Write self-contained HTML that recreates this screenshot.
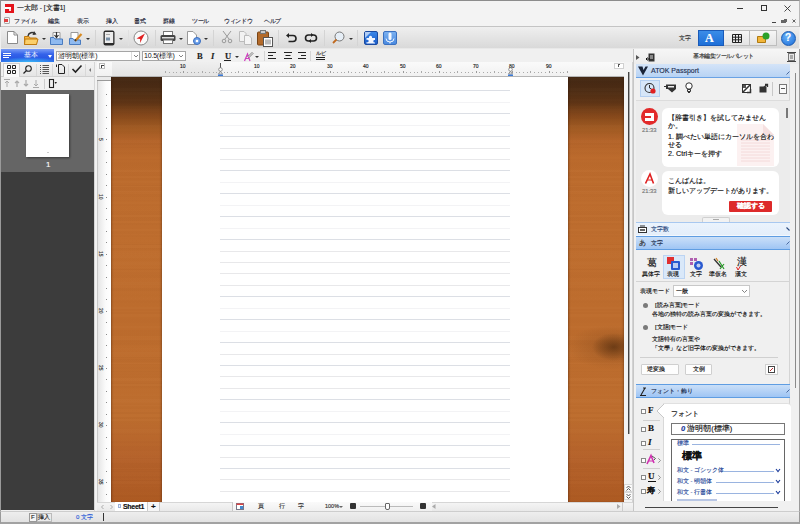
<!DOCTYPE html>
<html><head><meta charset="utf-8">
<style>
*{margin:0;padding:0;box-sizing:border-box}
html,body{width:800px;height:524px;overflow:hidden;background:#f0f0f0;font-family:"Liberation Sans",sans-serif;color:#222}
.a{position:absolute}
.t{position:absolute;white-space:nowrap;line-height:1;-webkit-text-stroke:.15px currentColor}
svg{position:absolute;overflow:visible}
.m{position:absolute;white-space:nowrap;line-height:1;font-size:6.3px;color:#1c2336;top:18px;letter-spacing:-.3px;-webkit-text-stroke:.15px currentColor}
.dd{position:absolute;width:0;height:0;border-left:2px solid transparent;border-right:2px solid transparent;border-top:2px solid #333}
.sep{position:absolute;width:1px;background:#d4d4d4}
</style></head><body>
<!-- ============ title bar ============ -->
<div class="a" style="left:0;top:0;width:800px;height:27px;background:#f3f3f3;border:1px solid #8c8c8c;border-right-color:#b8b8b8;border-bottom:none"></div>
<div class="a" style="left:5px;top:4px;width:9px;height:9px;background:#e4141b"></div>
<div class="a" style="left:5px;top:7px;width:6px;height:2px;background:#fff"></div>
<div class="a" style="left:9px;top:8px;width:2px;height:3px;background:#fff;opacity:.85"></div>
<div class="t" style="left:17px;top:5px;font-size:6.6px;color:#1a1a1a">一太郎 - [文書1]</div>
<!-- window controls -->
<div class="a" style="left:737px;top:8px;width:6px;height:1px;background:#333"></div>
<div class="a" style="left:761px;top:5px;width:6px;height:6px;border:1px solid #333"></div>
<svg style="left:784px;top:5px" width="7" height="7"><path d="M0.5 0.5L6.5 6.5M6.5 0.5L0.5 6.5" stroke="#333" stroke-width="0.9"/></svg>
<!-- mdi controls -->
<div class="a" style="left:772px;top:22px;width:4px;height:1px;background:#444"></div>
<div class="a" style="left:781px;top:20px;width:5px;height:3px;border:1px solid #666;border-top-width:2px"></div>
<div class="a" style="left:784px;top:19px;width:3px;height:3px;border-top:1px solid #666;border-right:1px solid #666"></div>
<svg style="left:792px;top:19px" width="4" height="4"><path d="M0.5 0.5L3.5 3.5M3.5 0.5L0.5 3.5" stroke="#555" stroke-width=".9"/></svg>
<!-- menu -->
<div class="a" style="left:4px;top:17px;width:6px;height:7px;border-radius:1px;border:1px solid #aaa;background:#f4f4f4"></div><div class="a" style="left:4px;top:19px;width:4px;height:3px;background:#e04040"></div>
<div class="m" style="left:14px">ファイル</div>
<div class="m" style="left:48px">編集</div>
<div class="m" style="left:77px">表示</div>
<div class="m" style="left:106px">挿入</div>
<div class="m" style="left:134px">書式</div>
<div class="m" style="left:163px">罫線</div>
<div class="m" style="left:192px">ツール</div>
<div class="m" style="left:224px">ウィンドウ</div>
<div class="m" style="left:264px">ヘルプ</div>
<!-- ============ toolbar ============ -->
<div class="a" style="left:1px;top:26px;width:798px;height:23px;background:linear-gradient(#efefef,#d9d9d9);border-top:1px solid #c4c4c4;border-bottom:1px solid #e8e8e8"></div>
<!-- new doc -->
<svg style="left:7px;top:31px" width="11" height="13"><path d="M0.5 0.5H7L10.5 4V12.5H0.5Z" fill="#fff" stroke="#8a8a8a"/><path d="M7 0.5V4H10.5" fill="none" stroke="#8a8a8a"/></svg>
<!-- open -->
<svg style="left:24px;top:30px" width="15" height="15"><path d="M0.5 6.5H5L6 8H12.5V14.5H0.5Z" fill="#f5b440" stroke="#c07a10"/><path d="M1 9H14L12.5 14.5H0.5Z" fill="#fbcf6a" stroke="#c07a10"/><path d="M4 6A4 4 0 0 1 11 4" fill="none" stroke="#333" stroke-width="1.4"/><path d="M10 1L12.5 4.5L8.5 5Z" fill="#333"/></svg>
<div class="dd" style="left:42px;top:38px"></div>
<!-- save -->
<svg style="left:50px;top:31px" width="13" height="14"><path d="M3 1.5H10V8H3Z" fill="#fff" stroke="#999"/><path d="M0.5 6.5H4L5 8H12.5V13.5H0.5Z" fill="#8fbaf0" stroke="#4a7cc0"/><path d="M6.5 1V6M4.5 4L6.5 6.5L8.5 4" fill="none" stroke="#333" stroke-width="1.2"/></svg>
<!-- edit -->
<svg style="left:69px;top:31px" width="14" height="14"><path d="M2 1.5H9V9H2Z" fill="#fff" stroke="#999"/><path d="M0.5 7.5H4L5 9H11.5V13.5H0.5Z" fill="#8fbaf0" stroke="#4a7cc0"/><path d="M6 10L12.5 3" stroke="#d88a20" stroke-width="2.2"/><path d="M6 10L7 8.5" stroke="#333" stroke-width="1.5"/></svg>
<div class="dd" style="left:86px;top:38px"></div>
<div class="sep" style="left:95px;top:30px;height:16px"></div>
<!-- tablet -->
<svg style="left:103px;top:30px" width="12" height="16"><rect x="0.5" y="0.5" width="11" height="15" rx="2" fill="#2a2a2a"/><rect x="1.8" y="2" width="8.4" height="11" fill="#ececec"/><rect x="3" y="4" width="4" height="1" fill="#aaa"/><rect x="3" y="7.5" width="4" height="3" fill="#7890a8"/></svg>
<div class="dd" style="left:119px;top:38px"></div>
<div class="sep" style="left:128px;top:30px;height:16px;background:#e0e0e0"></div>
<!-- compass -->
<svg style="left:133px;top:30px" width="16" height="16"><circle cx="8" cy="8" r="7" fill="#fafafa" stroke="#888"/><path d="M12 3.5L7 13L7.2 9L3.5 8.5Z" fill="#e02020"/></svg>
<div class="sep" style="left:155px;top:30px;height:16px"></div>
<!-- printer -->
<svg style="left:160px;top:31px" width="16" height="13"><rect x="3.5" y="0.5" width="9" height="4" fill="#fff" stroke="#777"/><rect x="0.5" y="4" width="15" height="6" rx="1.5" fill="#444"/><rect x="2" y="6" width="12" height="1.5" fill="#ddd"/><rect x="3.5" y="9" width="9" height="3.5" fill="#fff" stroke="#777"/></svg>
<div class="dd" style="left:179px;top:38px"></div>
<!-- doc gear -->
<svg style="left:187px;top:31px" width="14" height="14"><path d="M0.5 0.5H6L9.5 4V13.5H0.5Z" fill="#fff" stroke="#999"/><circle cx="10" cy="10" r="3.5" fill="#6a9ee8" stroke="#3a6ec0"/><circle cx="10" cy="10" r="1.3" fill="#fff"/></svg>
<div class="dd" style="left:204px;top:38px"></div>
<div class="sep" style="left:213px;top:30px;height:16px"></div>
<!-- scissors -->
<svg style="left:221px;top:31px" width="12" height="12"><path d="M2 0L8 8M10 0L4 8" stroke="#999" stroke-width="1"/><circle cx="3" cy="10" r="1.8" fill="none" stroke="#999"/><circle cx="9" cy="10" r="1.8" fill="none" stroke="#999"/></svg>
<!-- copy -->
<svg style="left:239px;top:31px" width="14" height="14"><path d="M0.5 0.5H5L7 2.5V10.5H0.5Z" fill="#f2f2f2" stroke="#bbb"/><path d="M5.5 4.5H10L12.5 7V13.5H5.5Z" fill="#f5f5f5" stroke="#bbb"/></svg>
<!-- paste -->
<svg style="left:257px;top:30px" width="16" height="17"><rect x="0.5" y="2" width="11" height="13" rx="1" fill="#b36a2a" stroke="#7a4515"/><rect x="3.5" y="0.5" width="5" height="3" fill="#ccc" stroke="#777"/><rect x="6.5" y="7.5" width="9" height="9" fill="#fff" stroke="#555"/><rect x="8" y="9.5" width="6" height="5" fill="#bbb"/></svg>
<div class="sep" style="left:278px;top:30px;height:16px"></div>
<!-- undo -->
<svg style="left:286px;top:33px" width="11" height="10"><path d="M2 2.5H7A3 3 0 0 1 7 8.5H2.5" fill="none" stroke="#222" stroke-width="1.6"/><path d="M0 2.5L3 0V5Z" fill="#222"/></svg>
<!-- redo -->
<svg style="left:305px;top:33px" width="12" height="10"><path d="M3.5 2H8.5A3 3 0 0 1 8.5 8H3.5A3 3 0 0 1 3.5 2" fill="none" stroke="#222" stroke-width="1.6"/><path d="M6 0L8.5 2L6 4Z" fill="#222"/><path d="M6 6L3.5 8L6 10Z" fill="#222"/></svg>
<div class="sep" style="left:324px;top:30px;height:16px"></div>
<!-- zoom -->
<svg style="left:332px;top:31px" width="13" height="13"><circle cx="7.5" cy="5.5" r="4.5" fill="#e6eef6" stroke="#777"/><path d="M4.5 8.5L1 12" stroke="#c06a20" stroke-width="1.8"/></svg>
<div class="dd" style="left:349px;top:38px"></div>
<div class="sep" style="left:357px;top:30px;height:16px"></div>
<!-- puzzle -->
<div class="a" style="left:364px;top:31px;width:14px;height:14px;border-radius:2px;background:linear-gradient(#3a86e8,#1a5cc8);border:1px solid #1a4aa0"></div>
<svg style="left:365px;top:32px" width="12" height="12"><path d="M0 0H6L0 6Z" fill="#cfe0fa" opacity=".8"/><path d="M1.5 6H4A1.6 1.6 0 1 1 7 6H10V8A1.3 1.3 0 1 0 10 10.5V11.5H1.5V10A1.3 1.3 0 1 0 1.5 8Z" fill="#f2f6ff"/></svg>
<!-- mic -->
<div class="a" style="left:383px;top:31px;width:14px;height:14px;border-radius:2px;background:linear-gradient(#7ab0f0,#4a8ae0);border:1px solid #3a70c0"></div>
<svg style="left:385px;top:32px" width="10" height="12"><rect x="3.5" y="0.5" width="3" height="7.5" rx="1.5" fill="#f4f8ff"/><path d="M1 6.5A4 3.5 0 0 0 9 6.5M5 10V11.5" fill="none" stroke="#f4f8ff" stroke-width="1"/></svg>
<!-- right of toolbar -->
<div class="t" style="left:679px;top:35px;font-size:6px;color:#333">文字</div>
<div class="a" style="left:698px;top:30px;width:26px;height:16px;background:linear-gradient(#3b8de8,#1e6fd8);border:1px solid #1a5ab8"></div>
<div class="t" style="left:705px;top:32px;font-size:12px;font-family:'Liberation Serif',serif;font-weight:bold;color:#fff">A</div>
<div class="a" style="left:724px;top:30px;width:26px;height:16px;background:linear-gradient(#f6f6f6,#e4e4e4);border:1px solid #bdbdbd;border-left:none"></div>
<svg style="left:732px;top:34px" width="10" height="9"><path d="M0.5 0.5H9.5V8.5H0.5ZM0.5 3.2H9.5M0.5 5.8H9.5M3.5 0.5V8.5M6.5 0.5V8.5" fill="none" stroke="#222" stroke-width="1"/></svg>
<div class="a" style="left:750px;top:30px;width:27px;height:16px;background:linear-gradient(#f6f6f6,#e4e4e4);border:1px solid #bdbdbd;border-left:none"></div>
<svg style="left:757px;top:32px" width="13" height="11"><path d="M0.5 4.5H8.5V10.5H0.5Z" fill="#f2b63a" stroke="#b07a10"/><circle cx="9" cy="4" r="3.5" fill="#2aa02a"/></svg>
<div class="a" style="left:781px;top:31px;width:15px;height:15px;border-radius:50%;background:radial-gradient(circle at 40% 35%,#6ab4f8,#1a6ad8);border:1px solid #1a5ab0"></div>
<div class="t" style="left:785px;top:33px;font-size:10px;font-weight:bold;color:#fff">?</div>

<!-- ============ format bar ============ -->
<div class="a" style="left:1px;top:49px;width:632px;height:13px;background:#f0f0f0"></div>
<div class="a" style="left:0;top:49px;width:54px;height:13px;background:radial-gradient(ellipse 30px 5px at 27px 13px,rgba(60,200,250,.8),rgba(60,200,250,0)),linear-gradient(#7a9cf6,#3462ea 40%,#2a58e4 70%,#2f6ae8);border-left:1px solid #e8eefc"></div>
<div class="a" style="left:3px;top:53px;width:8px;height:1px;background:#fff;box-shadow:0 2px 0 #fff"></div><div class="a" style="left:3px;top:57px;width:6px;height:1px;background:#fff"></div>
<div class="t" style="left:24px;top:52px;font-size:6.5px;color:#f4f8ff;-webkit-text-stroke:0">基本</div>
<div class="dd" style="left:48px;top:55px;border-top-color:#fff;border-left-width:2.5px;border-right-width:2.5px;border-top-width:3px"></div>
<div class="a" style="left:56px;top:51px;width:84px;height:10px;background:#fff;border:1px solid #a5a5a5"></div>
<div class="a" style="left:131px;top:52px;width:1px;height:8px;background:#ddd"></div>
<svg style="left:134px;top:55px" width="4" height="3"><path d="M0 0L2 2L4 0" fill="none" stroke="#666" stroke-width=".8"/></svg>
<div class="t" style="left:58px;top:52px;font-size:7px;color:#111;-webkit-text-stroke:0">游明朝(標準)</div>
<div class="a" style="left:142px;top:51px;width:44px;height:10px;background:#fff;border:1px solid #a5a5a5"></div>
<svg style="left:179px;top:55px" width="4" height="3"><path d="M0 0L2 2L4 0" fill="none" stroke="#666" stroke-width=".8"/></svg>
<div class="t" style="left:144px;top:52px;font-size:7px;color:#111;letter-spacing:-.2px;-webkit-text-stroke:0">10.5(標準)</div>
<div class="t" style="left:197px;top:52px;font-size:8.5px;font-family:'Liberation Serif',serif;font-weight:bold;color:#222">B</div>
<div class="t" style="left:211px;top:52px;font-size:8.5px;font-family:'Liberation Serif',serif;font-style:italic;font-weight:bold;color:#222">I</div>
<div class="t" style="left:225px;top:52px;font-size:8.5px;font-family:'Liberation Serif',serif;font-weight:bold;color:#222">U</div>
<div class="a" style="left:224px;top:60px;width:7px;height:1px;background:#222"></div>
<div class="dd" style="left:235px;top:56px"></div>
<svg style="left:243px;top:51px" width="11" height="11"><path d="M1.5 10L4.5 3L7 10M2.5 7.5H6" fill="none" stroke="#d040c0" stroke-width="1.2"/><path d="M5 5.5L9 1.5L10 2.5L6 6.5Z" fill="#fff" stroke="#555" stroke-width=".8"/></svg>
<div class="dd" style="left:255px;top:56px"></div>
<div class="sep" style="left:264px;top:51px;height:10px"></div>
<svg style="left:268px;top:52px" width="8" height="8"><path d="M0 .5H8M0 3.5H5M0 6.5H8" stroke="#222" stroke-width="1"/></svg>
<svg style="left:284px;top:52px" width="8" height="8"><path d="M0 .5H8M1.5 3.5H6.5M0 6.5H8" stroke="#222" stroke-width="1"/></svg>
<svg style="left:298px;top:52px" width="8" height="8"><path d="M0 .5H8M3 3.5H8M0 6.5H8" stroke="#222" stroke-width="1"/></svg>
<div class="sep" style="left:310px;top:51px;height:10px"></div>
<div class="t" style="left:316px;top:51px;font-size:5px;color:#222">ルビ</div>
<div class="a" style="left:316px;top:57px;width:9px;height:1px;background:#222"></div>
<div class="a" style="left:316px;top:59px;width:9px;height:1px;background:#222"></div>

<!-- ============ left panel ============ -->
<div class="a" style="left:0;top:62px;width:97px;height:449px;background:#f0f0f0;border-left:1px solid #9a9a9a"></div>
<div class="a" style="left:1px;top:76px;width:94px;height:1px;background:#cfcfcf"></div>
<div class="a" style="left:20px;top:63px;width:75px;height:13px;background:linear-gradient(#f3f3f3,#e5e5e5)"></div>
<div class="a" style="left:3px;top:63px;width:17px;height:14px;background:#f9f9f9;border:1px solid #d0d0d0;border-bottom:none"></div>
<div class="sep" style="left:36px;top:64px;height:12px;background:#d8d8d8"></div>
<div class="sep" style="left:52px;top:64px;height:12px;background:#d8d8d8"></div>
<div class="sep" style="left:68px;top:64px;height:12px;background:#d8d8d8"></div>
<div class="sep" style="left:85px;top:64px;height:12px;background:#d8d8d8"></div>
<svg style="left:7px;top:65px" width="9" height="9"><path d="M.5 .5H3.5V3.5H.5ZM5.5 .5H8.5V3.5H5.5ZM.5 5.5H3.5V8.5H.5ZM5.5 5.5H8.5V8.5H5.5Z" fill="none" stroke="#222" stroke-width="1"/></svg>
<svg style="left:23px;top:65px" width="9" height="9"><circle cx="5.5" cy="3.5" r="2.8" fill="none" stroke="#222" stroke-width="1.1"/><path d="M3.5 5.5L.5 8.5" stroke="#222" stroke-width="1.3"/></svg>
<svg style="left:40px;top:65px" width="9" height="9"><path d="M0 .5H1M0 2.5H1M0 4.5H1M0 6.5H1M0 8.5H1M2.5 .5H9M2.5 2.5H9M2.5 4.5H9M2.5 6.5H9M2.5 8.5H9" stroke="#555" stroke-width="1"/></svg>
<svg style="left:56px;top:64px" width="9" height="10"><path d="M2.5 .5H6L8.5 3V9.5H2.5Z" fill="none" stroke="#222" stroke-width="1"/><path d="M.5 .5V3" stroke="#222"/></svg>
<svg style="left:72px;top:65px" width="10" height="8"><path d="M.5 4L3.5 7L9.5 .5" fill="none" stroke="#222" stroke-width="1.6"/></svg>
<div class="dd" style="left:89px;top:68px;border-top:2px solid transparent;border-bottom:2px solid transparent;border-right:2px solid #777;border-left:none"></div>
<!-- icon row -->
<svg style="left:3px;top:79px" width="40" height="9"><path d="M1 .5H7M4 8V2M2 4L4 2L6 4" fill="none" stroke="#aaa" stroke-width="1"/><path d="M14 8V2M12 4L14 2L16 4" fill="none" stroke="#aaa" stroke-width="1.2"/><path d="M23 1V7M21 5L23 7L25 5" fill="none" stroke="#aaa" stroke-width="1.2"/><path d="M30 8.5H36M33 1V7M31 5L33 7L35 5" fill="none" stroke="#aaa" stroke-width="1"/></svg>
<div class="sep" style="left:44px;top:79px;height:10px;background:#ccc"></div>
<svg style="left:49px;top:79px" width="8" height="9"><rect x=".5" y=".5" width="4" height="8" fill="none" stroke="#222" stroke-width="1.1"/><path d="M5.5 3H8L6.75 5Z" fill="#222"/></svg>
<!-- thumbnails -->
<div class="a" style="left:1px;top:90px;width:93px;height:82px;background:#656565"></div>
<div class="a" style="left:1px;top:172px;width:93px;height:338px;background:#3c3c3c"></div>
<div class="a" style="left:26px;top:94px;width:43px;height:63px;background:#fff;box-shadow:1px 1px 2px rgba(0,0,0,.45)"></div>
<div class="a" style="left:47px;top:152px;width:2px;height:1px;background:#ccc"></div>
<div class="t" style="left:46px;top:161px;font-size:8px;color:#fafafa">1</div>
<div class="a" style="left:94px;top:62px;width:3px;height:449px;background:#f2f2f2;border-left:1px solid #d6d6d6"></div>

<!-- ============ rulers ============ -->
<div class="a" style="left:97px;top:62px;width:527px;height:15px;background:linear-gradient(#fafafa,#f1f1f1);border-bottom:1px solid #b5b5b5"></div>
<div class="a" style="left:112px;top:62px;width:108px;height:14px;background:linear-gradient(#efefef,#e4e4e4)"></div>
<div class="a" style="left:99px;top:63px;width:6px;height:6px;background:#fff;border:1px solid #bbb"></div>
<div class="a" style="left:101px;top:65px;width:3px;height:1px;background:#444"></div>
<div class="a" style="left:101px;top:65px;width:1px;height:3px;background:#444"></div>
<div class="a" style="left:165px;top:71px;width:1px;height:2px;background:#aaa"></div>
<div class="a" style="left:169px;top:72px;width:1px;height:1px;background:#aaa"></div>
<div class="a" style="left:173px;top:72px;width:1px;height:1px;background:#aaa"></div>
<div class="a" style="left:176px;top:72px;width:1px;height:1px;background:#aaa"></div>
<div class="a" style="left:180px;top:72px;width:1px;height:1px;background:#aaa"></div>
<div class="a" style="left:183px;top:71px;width:1px;height:2px;background:#999"></div>
<div class="a" style="left:187px;top:72px;width:1px;height:1px;background:#aaa"></div>
<div class="a" style="left:191px;top:72px;width:1px;height:1px;background:#aaa"></div>
<div class="a" style="left:194px;top:72px;width:1px;height:1px;background:#aaa"></div>
<div class="a" style="left:198px;top:72px;width:1px;height:1px;background:#aaa"></div>
<div class="a" style="left:202px;top:71px;width:1px;height:2px;background:#aaa"></div>
<div class="a" style="left:205px;top:72px;width:1px;height:1px;background:#aaa"></div>
<div class="a" style="left:209px;top:72px;width:1px;height:1px;background:#aaa"></div>
<div class="a" style="left:213px;top:72px;width:1px;height:1px;background:#aaa"></div>
<div class="a" style="left:216px;top:72px;width:1px;height:1px;background:#aaa"></div>
<div class="a" style="left:220px;top:71px;width:1px;height:2px;background:#999"></div>
<div class="a" style="left:224px;top:72px;width:1px;height:1px;background:#aaa"></div>
<div class="a" style="left:227px;top:72px;width:1px;height:1px;background:#aaa"></div>
<div class="a" style="left:231px;top:72px;width:1px;height:1px;background:#aaa"></div>
<div class="a" style="left:235px;top:72px;width:1px;height:1px;background:#aaa"></div>
<div class="a" style="left:238px;top:71px;width:1px;height:2px;background:#aaa"></div>
<div class="a" style="left:242px;top:72px;width:1px;height:1px;background:#aaa"></div>
<div class="a" style="left:246px;top:72px;width:1px;height:1px;background:#aaa"></div>
<div class="a" style="left:249px;top:72px;width:1px;height:1px;background:#aaa"></div>
<div class="a" style="left:253px;top:72px;width:1px;height:1px;background:#aaa"></div>
<div class="a" style="left:257px;top:71px;width:1px;height:2px;background:#999"></div>
<div class="a" style="left:260px;top:72px;width:1px;height:1px;background:#aaa"></div>
<div class="a" style="left:264px;top:72px;width:1px;height:1px;background:#aaa"></div>
<div class="a" style="left:267px;top:72px;width:1px;height:1px;background:#aaa"></div>
<div class="a" style="left:271px;top:72px;width:1px;height:1px;background:#aaa"></div>
<div class="a" style="left:275px;top:71px;width:1px;height:2px;background:#aaa"></div>
<div class="a" style="left:278px;top:72px;width:1px;height:1px;background:#aaa"></div>
<div class="a" style="left:282px;top:72px;width:1px;height:1px;background:#aaa"></div>
<div class="a" style="left:286px;top:72px;width:1px;height:1px;background:#aaa"></div>
<div class="a" style="left:289px;top:72px;width:1px;height:1px;background:#aaa"></div>
<div class="a" style="left:293px;top:71px;width:1px;height:2px;background:#999"></div>
<div class="a" style="left:297px;top:72px;width:1px;height:1px;background:#aaa"></div>
<div class="a" style="left:300px;top:72px;width:1px;height:1px;background:#aaa"></div>
<div class="a" style="left:304px;top:72px;width:1px;height:1px;background:#aaa"></div>
<div class="a" style="left:308px;top:72px;width:1px;height:1px;background:#aaa"></div>
<div class="a" style="left:311px;top:71px;width:1px;height:2px;background:#aaa"></div>
<div class="a" style="left:315px;top:72px;width:1px;height:1px;background:#aaa"></div>
<div class="a" style="left:319px;top:72px;width:1px;height:1px;background:#aaa"></div>
<div class="a" style="left:322px;top:72px;width:1px;height:1px;background:#aaa"></div>
<div class="a" style="left:326px;top:72px;width:1px;height:1px;background:#aaa"></div>
<div class="a" style="left:330px;top:71px;width:1px;height:2px;background:#999"></div>
<div class="a" style="left:333px;top:72px;width:1px;height:1px;background:#aaa"></div>
<div class="a" style="left:337px;top:72px;width:1px;height:1px;background:#aaa"></div>
<div class="a" style="left:341px;top:72px;width:1px;height:1px;background:#aaa"></div>
<div class="a" style="left:344px;top:72px;width:1px;height:1px;background:#aaa"></div>
<div class="a" style="left:348px;top:71px;width:1px;height:2px;background:#aaa"></div>
<div class="a" style="left:351px;top:72px;width:1px;height:1px;background:#aaa"></div>
<div class="a" style="left:355px;top:72px;width:1px;height:1px;background:#aaa"></div>
<div class="a" style="left:359px;top:72px;width:1px;height:1px;background:#aaa"></div>
<div class="a" style="left:362px;top:72px;width:1px;height:1px;background:#aaa"></div>
<div class="a" style="left:366px;top:71px;width:1px;height:2px;background:#999"></div>
<div class="a" style="left:370px;top:72px;width:1px;height:1px;background:#aaa"></div>
<div class="a" style="left:373px;top:72px;width:1px;height:1px;background:#aaa"></div>
<div class="a" style="left:377px;top:72px;width:1px;height:1px;background:#aaa"></div>
<div class="a" style="left:381px;top:72px;width:1px;height:1px;background:#aaa"></div>
<div class="a" style="left:384px;top:71px;width:1px;height:2px;background:#aaa"></div>
<div class="a" style="left:388px;top:72px;width:1px;height:1px;background:#aaa"></div>
<div class="a" style="left:392px;top:72px;width:1px;height:1px;background:#aaa"></div>
<div class="a" style="left:395px;top:72px;width:1px;height:1px;background:#aaa"></div>
<div class="a" style="left:399px;top:72px;width:1px;height:1px;background:#aaa"></div>
<div class="a" style="left:403px;top:71px;width:1px;height:2px;background:#999"></div>
<div class="a" style="left:406px;top:72px;width:1px;height:1px;background:#aaa"></div>
<div class="a" style="left:410px;top:72px;width:1px;height:1px;background:#aaa"></div>
<div class="a" style="left:414px;top:72px;width:1px;height:1px;background:#aaa"></div>
<div class="a" style="left:417px;top:72px;width:1px;height:1px;background:#aaa"></div>
<div class="a" style="left:421px;top:71px;width:1px;height:2px;background:#aaa"></div>
<div class="a" style="left:425px;top:72px;width:1px;height:1px;background:#aaa"></div>
<div class="a" style="left:428px;top:72px;width:1px;height:1px;background:#aaa"></div>
<div class="a" style="left:432px;top:72px;width:1px;height:1px;background:#aaa"></div>
<div class="a" style="left:435px;top:72px;width:1px;height:1px;background:#aaa"></div>
<div class="a" style="left:439px;top:71px;width:1px;height:2px;background:#999"></div>
<div class="a" style="left:443px;top:72px;width:1px;height:1px;background:#aaa"></div>
<div class="a" style="left:446px;top:72px;width:1px;height:1px;background:#aaa"></div>
<div class="a" style="left:450px;top:72px;width:1px;height:1px;background:#aaa"></div>
<div class="a" style="left:454px;top:72px;width:1px;height:1px;background:#aaa"></div>
<div class="a" style="left:457px;top:71px;width:1px;height:2px;background:#aaa"></div>
<div class="a" style="left:461px;top:72px;width:1px;height:1px;background:#aaa"></div>
<div class="a" style="left:465px;top:72px;width:1px;height:1px;background:#aaa"></div>
<div class="a" style="left:468px;top:72px;width:1px;height:1px;background:#aaa"></div>
<div class="a" style="left:472px;top:72px;width:1px;height:1px;background:#aaa"></div>
<div class="a" style="left:476px;top:71px;width:1px;height:2px;background:#999"></div>
<div class="a" style="left:479px;top:72px;width:1px;height:1px;background:#aaa"></div>
<div class="a" style="left:483px;top:72px;width:1px;height:1px;background:#aaa"></div>
<div class="a" style="left:487px;top:72px;width:1px;height:1px;background:#aaa"></div>
<div class="a" style="left:490px;top:72px;width:1px;height:1px;background:#aaa"></div>
<div class="a" style="left:494px;top:71px;width:1px;height:2px;background:#aaa"></div>
<div class="a" style="left:498px;top:72px;width:1px;height:1px;background:#aaa"></div>
<div class="a" style="left:501px;top:72px;width:1px;height:1px;background:#aaa"></div>
<div class="a" style="left:505px;top:72px;width:1px;height:1px;background:#aaa"></div>
<div class="a" style="left:509px;top:72px;width:1px;height:1px;background:#aaa"></div>
<div class="a" style="left:512px;top:71px;width:1px;height:2px;background:#999"></div>
<div class="a" style="left:516px;top:72px;width:1px;height:1px;background:#aaa"></div>
<div class="a" style="left:519px;top:72px;width:1px;height:1px;background:#aaa"></div>
<div class="a" style="left:523px;top:72px;width:1px;height:1px;background:#aaa"></div>
<div class="a" style="left:527px;top:72px;width:1px;height:1px;background:#aaa"></div>
<div class="a" style="left:530px;top:71px;width:1px;height:2px;background:#aaa"></div>
<div class="a" style="left:534px;top:72px;width:1px;height:1px;background:#aaa"></div>
<div class="a" style="left:538px;top:72px;width:1px;height:1px;background:#aaa"></div>
<div class="a" style="left:541px;top:72px;width:1px;height:1px;background:#aaa"></div>
<div class="a" style="left:545px;top:72px;width:1px;height:1px;background:#aaa"></div>
<div class="a" style="left:549px;top:71px;width:1px;height:2px;background:#999"></div>
<div class="a" style="left:552px;top:72px;width:1px;height:1px;background:#aaa"></div>
<div class="a" style="left:556px;top:72px;width:1px;height:1px;background:#aaa"></div>
<div class="a" style="left:560px;top:72px;width:1px;height:1px;background:#aaa"></div>
<div class="a" style="left:563px;top:72px;width:1px;height:1px;background:#aaa"></div>
<div class="a" style="left:567px;top:71px;width:1px;height:2px;background:#aaa"></div>
<div class="t" style="left:180px;top:64px;font-size:5px;color:#222">10</div>
<div class="t" style="left:254px;top:64px;font-size:5px;color:#222">10</div>
<div class="t" style="left:290px;top:64px;font-size:5px;color:#222">20</div>
<div class="t" style="left:327px;top:64px;font-size:5px;color:#222">30</div>
<div class="t" style="left:363px;top:64px;font-size:5px;color:#222">40</div>
<div class="t" style="left:400px;top:64px;font-size:5px;color:#222">50</div>
<div class="t" style="left:436px;top:64px;font-size:5px;color:#222">60</div>
<div class="t" style="left:473px;top:64px;font-size:5px;color:#222">70</div>
<div class="t" style="left:509px;top:64px;font-size:5px;color:#222">80</div>
<div class="t" style="left:546px;top:64px;font-size:5px;color:#222">90</div>
<div class="a" style="left:97px;top:77px;width:15px;height:425px;background:linear-gradient(90deg,#e6e6e6,#fbfbfb 60%,#ffffff);border-right:1px solid #d0d0d0;border-left:1px solid #c8c8c8"></div>
<div class="a" style="left:97px;top:77px;width:14px;height:4px;background:#eaeaea;border-bottom:1px solid #999"></div>
<div class="a" style="left:106px;top:94px;width:1px;height:1px;background:#8a8a8a"></div>
<div class="a" style="left:106px;top:105px;width:1px;height:1px;background:#8a8a8a"></div>
<div class="a" style="left:106px;top:117px;width:1px;height:1px;background:#8a8a8a"></div>
<div class="a" style="left:106px;top:128px;width:1px;height:1px;background:#8a8a8a"></div>
<div class="a" style="left:106px;top:139px;width:1px;height:1px;background:#8a8a8a"></div>
<div class="a" style="left:106px;top:151px;width:1px;height:1px;background:#8a8a8a"></div>
<div class="a" style="left:106px;top:162px;width:1px;height:1px;background:#8a8a8a"></div>
<div class="a" style="left:106px;top:174px;width:1px;height:1px;background:#8a8a8a"></div>
<div class="a" style="left:106px;top:185px;width:1px;height:1px;background:#8a8a8a"></div>
<div class="a" style="left:106px;top:197px;width:1px;height:1px;background:#8a8a8a"></div>
<div class="a" style="left:106px;top:208px;width:1px;height:1px;background:#8a8a8a"></div>
<div class="a" style="left:106px;top:219px;width:1px;height:1px;background:#8a8a8a"></div>
<div class="a" style="left:106px;top:231px;width:1px;height:1px;background:#8a8a8a"></div>
<div class="a" style="left:106px;top:242px;width:1px;height:1px;background:#8a8a8a"></div>
<div class="a" style="left:106px;top:254px;width:1px;height:1px;background:#8a8a8a"></div>
<div class="a" style="left:106px;top:265px;width:1px;height:1px;background:#8a8a8a"></div>
<div class="a" style="left:106px;top:277px;width:1px;height:1px;background:#8a8a8a"></div>
<div class="a" style="left:106px;top:288px;width:1px;height:1px;background:#8a8a8a"></div>
<div class="a" style="left:106px;top:299px;width:1px;height:1px;background:#8a8a8a"></div>
<div class="a" style="left:106px;top:311px;width:1px;height:1px;background:#8a8a8a"></div>
<div class="a" style="left:106px;top:322px;width:1px;height:1px;background:#8a8a8a"></div>
<div class="a" style="left:106px;top:334px;width:1px;height:1px;background:#8a8a8a"></div>
<div class="a" style="left:106px;top:345px;width:1px;height:1px;background:#8a8a8a"></div>
<div class="a" style="left:106px;top:357px;width:1px;height:1px;background:#8a8a8a"></div>
<div class="a" style="left:106px;top:368px;width:1px;height:1px;background:#8a8a8a"></div>
<div class="a" style="left:106px;top:379px;width:1px;height:1px;background:#8a8a8a"></div>
<div class="a" style="left:106px;top:391px;width:1px;height:1px;background:#8a8a8a"></div>
<div class="a" style="left:106px;top:402px;width:1px;height:1px;background:#8a8a8a"></div>
<div class="a" style="left:106px;top:414px;width:1px;height:1px;background:#8a8a8a"></div>
<div class="a" style="left:106px;top:425px;width:1px;height:1px;background:#8a8a8a"></div>
<div class="a" style="left:106px;top:437px;width:1px;height:1px;background:#8a8a8a"></div>
<div class="a" style="left:106px;top:448px;width:1px;height:1px;background:#8a8a8a"></div>
<div class="a" style="left:106px;top:459px;width:1px;height:1px;background:#8a8a8a"></div>
<div class="a" style="left:106px;top:471px;width:1px;height:1px;background:#8a8a8a"></div>
<div class="a" style="left:106px;top:482px;width:1px;height:1px;background:#8a8a8a"></div>
<div class="a" style="left:106px;top:494px;width:1px;height:1px;background:#8a8a8a"></div>
<div class="t" style="left:98px;top:138px;font-size:5px;color:#333;transform-origin:0 0;transform:translate(5px,0) rotate(90deg)">5</div>
<div class="t" style="left:98px;top:194px;font-size:5px;color:#333;transform-origin:0 0;transform:translate(5px,0) rotate(90deg)">10</div>
<div class="t" style="left:98px;top:251px;font-size:5px;color:#333;transform-origin:0 0;transform:translate(5px,0) rotate(90deg)">15</div>
<div class="t" style="left:98px;top:308px;font-size:5px;color:#333;transform-origin:0 0;transform:translate(5px,0) rotate(90deg)">20</div>
<div class="t" style="left:98px;top:365px;font-size:5px;color:#333;transform-origin:0 0;transform:translate(5px,0) rotate(90deg)">25</div>
<div class="t" style="left:98px;top:422px;font-size:5px;color:#333;transform-origin:0 0;transform:translate(5px,0) rotate(90deg)">30</div>
<div class="t" style="left:98px;top:479px;font-size:5px;color:#333;transform-origin:0 0;transform:translate(5px,0) rotate(90deg)">35</div>
<div class="a" style="left:614px;top:63px;width:10px;height:6px;background:#fff;border:1px solid #d0d0d0"></div>
<div class="a" style="left:618px;top:64px;width:1px;height:3px;background:#555"></div><div class="a" style="left:618px;top:64px;width:2px;height:1px;background:#555"></div>

<!-- ============ document ============ -->
<div class="a" style="left:111px;top:77px;width:51px;height:425px;background:linear-gradient(rgba(255,210,160,0.019) 0px,rgba(255,210,160,0.019) 2px,rgba(255,210,160,0.010) 2px,rgba(255,210,160,0.010) 4px,rgba(60,25,5,0.004) 4px,rgba(60,25,5,0.004) 5px,rgba(60,25,5,0.017) 5px,rgba(60,25,5,0.017) 8px,rgba(60,25,5,0.003) 8px,rgba(60,25,5,0.003) 10px,rgba(60,25,5,0.013) 10px,rgba(60,25,5,0.013) 11px,rgba(255,210,160,0.014) 11px,rgba(255,210,160,0.014) 13px,rgba(255,210,160,0.014) 13px,rgba(255,210,160,0.014) 14px,rgba(60,25,5,0.001) 14px,rgba(60,25,5,0.001) 15px,rgba(255,210,160,0.013) 15px,rgba(255,210,160,0.013) 16px,rgba(255,210,160,0.010) 16px,rgba(255,210,160,0.010) 18px,rgba(60,25,5,0.005) 18px,rgba(60,25,5,0.005) 21px,rgba(60,25,5,0.015) 21px,rgba(60,25,5,0.015) 22px,rgba(255,210,160,0.009) 22px,rgba(255,210,160,0.009) 24px,rgba(60,25,5,0.016) 24px,rgba(60,25,5,0.016) 25px,rgba(60,25,5,0.011) 25px,rgba(60,25,5,0.011) 26px,rgba(60,25,5,0.017) 26px,rgba(60,25,5,0.017) 29px,rgba(255,210,160,0.009) 29px,rgba(255,210,160,0.009) 31px,rgba(255,210,160,0.005) 31px,rgba(255,210,160,0.005) 32px,rgba(255,210,160,0.010) 32px,rgba(255,210,160,0.010) 33px,rgba(255,210,160,0.009) 33px,rgba(255,210,160,0.009) 35px,rgba(60,25,5,0.017) 35px,rgba(60,25,5,0.017) 36px,rgba(60,25,5,0.007) 36px,rgba(60,25,5,0.007) 37px,rgba(60,25,5,0.017) 37px,rgba(60,25,5,0.017) 39px,rgba(60,25,5,0.016) 39px,rgba(60,25,5,0.016) 40px,rgba(60,25,5,0.018) 40px,rgba(60,25,5,0.018) 42px,rgba(60,25,5,0.004) 42px,rgba(60,25,5,0.004) 45px,rgba(60,25,5,0.009) 45px,rgba(60,25,5,0.009) 46px,rgba(60,25,5,0.009) 46px,rgba(60,25,5,0.009) 48px,rgba(255,210,160,0.019) 48px,rgba(255,210,160,0.019) 50px,rgba(255,210,160,0.007) 50px,rgba(255,210,160,0.007) 53px,rgba(255,210,160,0.004) 53px,rgba(255,210,160,0.004) 54px,rgba(60,25,5,0.014) 54px,rgba(60,25,5,0.014) 57px,rgba(60,25,5,0.005) 57px,rgba(60,25,5,0.005) 58px,rgba(60,25,5,0.007) 58px,rgba(60,25,5,0.007) 61px,rgba(60,25,5,0.002) 61px,rgba(60,25,5,0.002) 62px,rgba(60,25,5,0.000) 62px,rgba(60,25,5,0.000) 63px,rgba(255,210,160,0.010) 63px,rgba(255,210,160,0.010) 66px,rgba(60,25,5,0.018) 66px,rgba(60,25,5,0.018) 68px,rgba(60,25,5,0.004) 68px,rgba(60,25,5,0.004) 70px,rgba(60,25,5,0.018) 70px,rgba(60,25,5,0.018) 71px,rgba(255,210,160,0.003) 71px,rgba(255,210,160,0.003) 72px,rgba(255,210,160,0.004) 72px,rgba(255,210,160,0.004) 75px,rgba(60,25,5,0.013) 75px,rgba(60,25,5,0.013) 77px,rgba(60,25,5,0.002) 77px,rgba(60,25,5,0.002) 78px,rgba(255,210,160,0.005) 78px,rgba(255,210,160,0.005) 80px,rgba(255,210,160,0.009) 80px,rgba(255,210,160,0.009) 82px,rgba(60,25,5,0.006) 82px,rgba(60,25,5,0.006) 84px,rgba(60,25,5,0.003) 84px,rgba(60,25,5,0.003) 85px,rgba(60,25,5,0.014) 85px,rgba(60,25,5,0.014) 88px,rgba(60,25,5,0.016) 88px,rgba(60,25,5,0.016) 89px,rgba(60,25,5,0.010) 89px,rgba(60,25,5,0.010) 91px,rgba(60,25,5,0.006) 91px,rgba(60,25,5,0.006) 92px,rgba(60,25,5,0.002) 92px,rgba(60,25,5,0.002) 93px,rgba(255,210,160,0.022) 93px,rgba(255,210,160,0.022) 95px,rgba(60,25,5,0.013) 95px,rgba(60,25,5,0.013) 98px,rgba(60,25,5,0.020) 98px,rgba(60,25,5,0.020) 99px,rgba(255,210,160,0.015) 99px,rgba(255,210,160,0.015) 101px,rgba(60,25,5,0.013) 101px,rgba(60,25,5,0.013) 102px,rgba(60,25,5,0.016) 102px,rgba(60,25,5,0.016) 103px,rgba(60,25,5,0.002) 103px,rgba(60,25,5,0.002) 104px,rgba(255,210,160,0.020) 104px,rgba(255,210,160,0.020) 105px,rgba(255,210,160,0.017) 105px,rgba(255,210,160,0.017) 106px,rgba(60,25,5,0.002) 106px,rgba(60,25,5,0.002) 108px,rgba(60,25,5,0.019) 108px,rgba(60,25,5,0.019) 109px,rgba(255,210,160,0.019) 109px,rgba(255,210,160,0.019) 110px,rgba(60,25,5,0.015) 110px,rgba(60,25,5,0.015) 113px,rgba(60,25,5,0.013) 113px,rgba(60,25,5,0.013) 114px,rgba(255,210,160,0.022) 114px,rgba(255,210,160,0.022) 115px,rgba(255,210,160,0.009) 115px,rgba(255,210,160,0.009) 117px,rgba(60,25,5,0.010) 117px,rgba(60,25,5,0.010) 120px,rgba(255,210,160,0.002) 120px,rgba(255,210,160,0.002) 123px,rgba(60,25,5,0.007) 123px,rgba(60,25,5,0.007) 124px,rgba(255,210,160,0.005) 124px,rgba(255,210,160,0.005) 125px,rgba(255,210,160,0.017) 125px,rgba(255,210,160,0.017) 127px,rgba(60,25,5,0.006) 127px,rgba(60,25,5,0.006) 129px,rgba(255,210,160,0.003) 129px,rgba(255,210,160,0.003) 131px,rgba(255,210,160,0.004) 131px,rgba(255,210,160,0.004) 134px,rgba(60,25,5,0.011) 134px,rgba(60,25,5,0.011) 136px,rgba(60,25,5,0.015) 136px,rgba(60,25,5,0.015) 138px,rgba(255,210,160,0.018) 138px,rgba(255,210,160,0.018) 140px,rgba(60,25,5,0.019) 140px,rgba(60,25,5,0.019) 141px,rgba(60,25,5,0.020) 141px,rgba(60,25,5,0.020) 144px,rgba(255,210,160,0.011) 144px,rgba(255,210,160,0.011) 145px,rgba(255,210,160,0.016) 145px,rgba(255,210,160,0.016) 146px,rgba(60,25,5,0.018) 146px,rgba(60,25,5,0.018) 148px,rgba(60,25,5,0.006) 148px,rgba(60,25,5,0.006) 150px,rgba(60,25,5,0.008) 150px,rgba(60,25,5,0.008) 152px,rgba(255,210,160,0.016) 152px,rgba(255,210,160,0.016) 154px,rgba(60,25,5,0.010) 154px,rgba(60,25,5,0.010) 157px,rgba(255,210,160,0.006) 157px,rgba(255,210,160,0.006) 158px,rgba(60,25,5,0.013) 158px,rgba(60,25,5,0.013) 160px,rgba(60,25,5,0.000) 160px,rgba(60,25,5,0.000) 163px,rgba(255,210,160,0.004) 163px,rgba(255,210,160,0.004) 165px,rgba(60,25,5,0.005) 165px,rgba(60,25,5,0.005) 167px,rgba(60,25,5,0.022) 167px,rgba(60,25,5,0.022) 168px,rgba(255,210,160,0.014) 168px,rgba(255,210,160,0.014) 169px,rgba(255,210,160,0.021) 169px,rgba(255,210,160,0.021) 171px,rgba(60,25,5,0.018) 171px,rgba(60,25,5,0.018) 172px,rgba(60,25,5,0.017) 172px,rgba(60,25,5,0.017) 173px,rgba(60,25,5,0.004) 173px,rgba(60,25,5,0.004) 174px,rgba(255,210,160,0.012) 174px,rgba(255,210,160,0.012) 176px,rgba(255,210,160,0.014) 176px,rgba(255,210,160,0.014) 179px,rgba(255,210,160,0.019) 179px,rgba(255,210,160,0.019) 181px,rgba(255,210,160,0.002) 181px,rgba(255,210,160,0.002) 182px,rgba(60,25,5,0.003) 182px,rgba(60,25,5,0.003) 184px,rgba(255,210,160,0.008) 184px,rgba(255,210,160,0.008) 185px,rgba(255,210,160,0.018) 185px,rgba(255,210,160,0.018) 188px,rgba(255,210,160,0.007) 188px,rgba(255,210,160,0.007) 190px,rgba(255,210,160,0.016) 190px,rgba(255,210,160,0.016) 191px,rgba(255,210,160,0.005) 191px,rgba(255,210,160,0.005) 192px,rgba(60,25,5,0.022) 192px,rgba(60,25,5,0.022) 193px,rgba(255,210,160,0.006) 193px,rgba(255,210,160,0.006) 195px,rgba(60,25,5,0.008) 195px,rgba(60,25,5,0.008) 196px,rgba(60,25,5,0.008) 196px,rgba(60,25,5,0.008) 198px,rgba(60,25,5,0.011) 198px,rgba(60,25,5,0.011) 200px,rgba(60,25,5,0.009) 200px,rgba(60,25,5,0.009) 201px,rgba(255,210,160,0.007) 201px,rgba(255,210,160,0.007) 204px,rgba(255,210,160,0.010) 204px,rgba(255,210,160,0.010) 205px,rgba(255,210,160,0.018) 205px,rgba(255,210,160,0.018) 208px,rgba(255,210,160,0.013) 208px,rgba(255,210,160,0.013) 210px,rgba(255,210,160,0.010) 210px,rgba(255,210,160,0.010) 211px,rgba(60,25,5,0.014) 211px,rgba(60,25,5,0.014) 214px,rgba(255,210,160,0.006) 214px,rgba(255,210,160,0.006) 217px,rgba(255,210,160,0.005) 217px,rgba(255,210,160,0.005) 220px,rgba(255,210,160,0.012) 220px,rgba(255,210,160,0.012) 223px,rgba(60,25,5,0.009) 223px,rgba(60,25,5,0.009) 224px,rgba(60,25,5,0.013) 224px,rgba(60,25,5,0.013) 225px,rgba(60,25,5,0.011) 225px,rgba(60,25,5,0.011) 226px,rgba(60,25,5,0.003) 226px,rgba(60,25,5,0.003) 229px,rgba(60,25,5,0.001) 229px,rgba(60,25,5,0.001) 230px,rgba(255,210,160,0.020) 230px,rgba(255,210,160,0.020) 232px,rgba(60,25,5,0.006) 232px,rgba(60,25,5,0.006) 234px,rgba(255,210,160,0.007) 234px,rgba(255,210,160,0.007) 235px,rgba(60,25,5,0.012) 235px,rgba(60,25,5,0.012) 237px,rgba(255,210,160,0.014) 237px,rgba(255,210,160,0.014) 239px,rgba(255,210,160,0.015) 239px,rgba(255,210,160,0.015) 240px,rgba(60,25,5,0.004) 240px,rgba(60,25,5,0.004) 241px,rgba(60,25,5,0.007) 241px,rgba(60,25,5,0.007) 243px,rgba(60,25,5,0.011) 243px,rgba(60,25,5,0.011) 246px,rgba(60,25,5,0.003) 246px,rgba(60,25,5,0.003) 249px,rgba(255,210,160,0.016) 249px,rgba(255,210,160,0.016) 251px,rgba(255,210,160,0.001) 251px,rgba(255,210,160,0.001) 253px,rgba(60,25,5,0.014) 253px,rgba(60,25,5,0.014) 256px,rgba(60,25,5,0.014) 256px,rgba(60,25,5,0.014) 259px,rgba(255,210,160,0.013) 259px,rgba(255,210,160,0.013) 262px,rgba(255,210,160,0.020) 262px,rgba(255,210,160,0.020) 263px,rgba(60,25,5,0.020) 263px,rgba(60,25,5,0.020) 265px,rgba(60,25,5,0.020) 265px,rgba(60,25,5,0.020) 267px,rgba(60,25,5,0.020) 267px,rgba(60,25,5,0.020) 268px,rgba(60,25,5,0.003) 268px,rgba(60,25,5,0.003) 269px,rgba(255,210,160,0.002) 269px,rgba(255,210,160,0.002) 271px,rgba(255,210,160,0.012) 271px,rgba(255,210,160,0.012) 273px,rgba(255,210,160,0.009) 273px,rgba(255,210,160,0.009) 274px,rgba(255,210,160,0.002) 274px,rgba(255,210,160,0.002) 275px,rgba(255,210,160,0.020) 275px,rgba(255,210,160,0.020) 277px,rgba(255,210,160,0.016) 277px,rgba(255,210,160,0.016) 278px,rgba(255,210,160,0.011) 278px,rgba(255,210,160,0.011) 280px,rgba(60,25,5,0.018) 280px,rgba(60,25,5,0.018) 281px,rgba(255,210,160,0.001) 281px,rgba(255,210,160,0.001) 282px,rgba(60,25,5,0.020) 282px,rgba(60,25,5,0.020) 285px,rgba(60,25,5,0.004) 285px,rgba(60,25,5,0.004) 286px,rgba(255,210,160,0.022) 286px,rgba(255,210,160,0.022) 287px,rgba(60,25,5,0.013) 287px,rgba(60,25,5,0.013) 288px,rgba(60,25,5,0.002) 288px,rgba(60,25,5,0.002) 290px,rgba(60,25,5,0.010) 290px,rgba(60,25,5,0.010) 292px,rgba(60,25,5,0.005) 292px,rgba(60,25,5,0.005) 294px,rgba(60,25,5,0.019) 294px,rgba(60,25,5,0.019) 295px,rgba(60,25,5,0.008) 295px,rgba(60,25,5,0.008) 297px,rgba(60,25,5,0.013) 297px,rgba(60,25,5,0.013) 298px,rgba(60,25,5,0.007) 298px,rgba(60,25,5,0.007) 299px,rgba(60,25,5,0.013) 299px,rgba(60,25,5,0.013) 301px,rgba(255,210,160,0.022) 301px,rgba(255,210,160,0.022) 304px,rgba(60,25,5,0.006) 304px,rgba(60,25,5,0.006) 306px,rgba(60,25,5,0.018) 306px,rgba(60,25,5,0.018) 307px,rgba(255,210,160,0.019) 307px,rgba(255,210,160,0.019) 309px,rgba(60,25,5,0.017) 309px,rgba(60,25,5,0.017) 311px,rgba(60,25,5,0.002) 311px,rgba(60,25,5,0.002) 312px,rgba(255,210,160,0.002) 312px,rgba(255,210,160,0.002) 314px,rgba(60,25,5,0.001) 314px,rgba(60,25,5,0.001) 317px,rgba(255,210,160,0.007) 317px,rgba(255,210,160,0.007) 319px,rgba(60,25,5,0.004) 319px,rgba(60,25,5,0.004) 322px,rgba(255,210,160,0.022) 322px,rgba(255,210,160,0.022) 325px,rgba(255,210,160,0.017) 325px,rgba(255,210,160,0.017) 326px,rgba(60,25,5,0.003) 326px,rgba(60,25,5,0.003) 327px,rgba(60,25,5,0.006) 327px,rgba(60,25,5,0.006) 328px,rgba(255,210,160,0.017) 328px,rgba(255,210,160,0.017) 329px,rgba(60,25,5,0.002) 329px,rgba(60,25,5,0.002) 330px,rgba(60,25,5,0.012) 330px,rgba(60,25,5,0.012) 332px,rgba(255,210,160,0.012) 332px,rgba(255,210,160,0.012) 335px,rgba(60,25,5,0.018) 335px,rgba(60,25,5,0.018) 337px,rgba(255,210,160,0.015) 337px,rgba(255,210,160,0.015) 340px,rgba(60,25,5,0.020) 340px,rgba(60,25,5,0.020) 342px,rgba(255,210,160,0.021) 342px,rgba(255,210,160,0.021) 344px,rgba(60,25,5,0.013) 344px,rgba(60,25,5,0.013) 347px,rgba(60,25,5,0.009) 347px,rgba(60,25,5,0.009) 349px,rgba(60,25,5,0.007) 349px,rgba(60,25,5,0.007) 352px,rgba(255,210,160,0.014) 352px,rgba(255,210,160,0.014) 354px,rgba(255,210,160,0.015) 354px,rgba(255,210,160,0.015) 356px,rgba(60,25,5,0.000) 356px,rgba(60,25,5,0.000) 357px,rgba(60,25,5,0.014) 357px,rgba(60,25,5,0.014) 358px,rgba(60,25,5,0.001) 358px,rgba(60,25,5,0.001) 360px,rgba(255,210,160,0.001) 360px,rgba(255,210,160,0.001) 362px,rgba(255,210,160,0.002) 362px,rgba(255,210,160,0.002) 364px,rgba(60,25,5,0.016) 364px,rgba(60,25,5,0.016) 366px,rgba(60,25,5,0.001) 366px,rgba(60,25,5,0.001) 367px,rgba(255,210,160,0.003) 367px,rgba(255,210,160,0.003) 369px,rgba(60,25,5,0.013) 369px,rgba(60,25,5,0.013) 370px,rgba(60,25,5,0.009) 370px,rgba(60,25,5,0.009) 373px,rgba(60,25,5,0.008) 373px,rgba(60,25,5,0.008) 374px,rgba(255,210,160,0.010) 374px,rgba(255,210,160,0.010) 376px,rgba(255,210,160,0.013) 376px,rgba(255,210,160,0.013) 378px,rgba(255,210,160,0.008) 378px,rgba(255,210,160,0.008) 380px,rgba(255,210,160,0.021) 380px,rgba(255,210,160,0.021) 381px,rgba(60,25,5,0.011) 381px,rgba(60,25,5,0.011) 382px,rgba(255,210,160,0.017) 382px,rgba(255,210,160,0.017) 384px,rgba(255,210,160,0.006) 384px,rgba(255,210,160,0.006) 386px,rgba(60,25,5,0.015) 386px,rgba(60,25,5,0.015) 389px,rgba(60,25,5,0.017) 389px,rgba(60,25,5,0.017) 391px,rgba(255,210,160,0.011) 391px,rgba(255,210,160,0.011) 392px,rgba(60,25,5,0.019) 392px,rgba(60,25,5,0.019) 393px,rgba(60,25,5,0.000) 393px,rgba(60,25,5,0.000) 394px,rgba(60,25,5,0.014) 394px,rgba(60,25,5,0.014) 395px,rgba(255,210,160,0.006) 395px,rgba(255,210,160,0.006) 398px,rgba(255,210,160,0.012) 398px,rgba(255,210,160,0.012) 399px,rgba(60,25,5,0.011) 399px,rgba(60,25,5,0.011) 401px,rgba(255,210,160,0.008) 401px,rgba(255,210,160,0.008) 403px,rgba(60,25,5,0.018) 403px,rgba(60,25,5,0.018) 404px,rgba(255,210,160,0.018) 404px,rgba(255,210,160,0.018) 407px,rgba(60,25,5,0.009) 407px,rgba(60,25,5,0.009) 409px,rgba(255,210,160,0.008) 409px,rgba(255,210,160,0.008) 410px,rgba(60,25,5,0.007) 410px,rgba(60,25,5,0.007) 413px,rgba(60,25,5,0.009) 413px,rgba(60,25,5,0.009) 414px,rgba(60,25,5,0.010) 414px,rgba(60,25,5,0.010) 415px,rgba(255,210,160,0.002) 415px,rgba(255,210,160,0.002) 418px,rgba(60,25,5,0.018) 418px,rgba(60,25,5,0.018) 420px,rgba(60,25,5,0.002) 420px,rgba(60,25,5,0.002) 421px,rgba(60,25,5,0.002) 421px,rgba(60,25,5,0.002) 424px,rgba(60,25,5,0.006) 424px,rgba(60,25,5,0.006) 426px),linear-gradient(#432713 0%,#4c2c14 3%,#5e3415 6%,#85481b 9%,#a05a22 12%,#b4642a 15%,#bb6a2c 19%,#be6d2e 35%,#bd6c2d 55%,#bd6d2e 80%,#b4612a 90%,#ad5a22 100%);box-shadow:inset 2px 0 2px -1px rgba(40,15,0,.35),inset -2px 0 2px -1px rgba(40,15,0,.3)"></div>
<div class="a" style="left:568px;top:77px;width:56px;height:425px;background:linear-gradient(rgba(255,210,160,0.019) 0px,rgba(255,210,160,0.019) 2px,rgba(255,210,160,0.010) 2px,rgba(255,210,160,0.010) 4px,rgba(60,25,5,0.004) 4px,rgba(60,25,5,0.004) 5px,rgba(60,25,5,0.017) 5px,rgba(60,25,5,0.017) 8px,rgba(60,25,5,0.003) 8px,rgba(60,25,5,0.003) 10px,rgba(60,25,5,0.013) 10px,rgba(60,25,5,0.013) 11px,rgba(255,210,160,0.014) 11px,rgba(255,210,160,0.014) 13px,rgba(255,210,160,0.014) 13px,rgba(255,210,160,0.014) 14px,rgba(60,25,5,0.001) 14px,rgba(60,25,5,0.001) 15px,rgba(255,210,160,0.013) 15px,rgba(255,210,160,0.013) 16px,rgba(255,210,160,0.010) 16px,rgba(255,210,160,0.010) 18px,rgba(60,25,5,0.005) 18px,rgba(60,25,5,0.005) 21px,rgba(60,25,5,0.015) 21px,rgba(60,25,5,0.015) 22px,rgba(255,210,160,0.009) 22px,rgba(255,210,160,0.009) 24px,rgba(60,25,5,0.016) 24px,rgba(60,25,5,0.016) 25px,rgba(60,25,5,0.011) 25px,rgba(60,25,5,0.011) 26px,rgba(60,25,5,0.017) 26px,rgba(60,25,5,0.017) 29px,rgba(255,210,160,0.009) 29px,rgba(255,210,160,0.009) 31px,rgba(255,210,160,0.005) 31px,rgba(255,210,160,0.005) 32px,rgba(255,210,160,0.010) 32px,rgba(255,210,160,0.010) 33px,rgba(255,210,160,0.009) 33px,rgba(255,210,160,0.009) 35px,rgba(60,25,5,0.017) 35px,rgba(60,25,5,0.017) 36px,rgba(60,25,5,0.007) 36px,rgba(60,25,5,0.007) 37px,rgba(60,25,5,0.017) 37px,rgba(60,25,5,0.017) 39px,rgba(60,25,5,0.016) 39px,rgba(60,25,5,0.016) 40px,rgba(60,25,5,0.018) 40px,rgba(60,25,5,0.018) 42px,rgba(60,25,5,0.004) 42px,rgba(60,25,5,0.004) 45px,rgba(60,25,5,0.009) 45px,rgba(60,25,5,0.009) 46px,rgba(60,25,5,0.009) 46px,rgba(60,25,5,0.009) 48px,rgba(255,210,160,0.019) 48px,rgba(255,210,160,0.019) 50px,rgba(255,210,160,0.007) 50px,rgba(255,210,160,0.007) 53px,rgba(255,210,160,0.004) 53px,rgba(255,210,160,0.004) 54px,rgba(60,25,5,0.014) 54px,rgba(60,25,5,0.014) 57px,rgba(60,25,5,0.005) 57px,rgba(60,25,5,0.005) 58px,rgba(60,25,5,0.007) 58px,rgba(60,25,5,0.007) 61px,rgba(60,25,5,0.002) 61px,rgba(60,25,5,0.002) 62px,rgba(60,25,5,0.000) 62px,rgba(60,25,5,0.000) 63px,rgba(255,210,160,0.010) 63px,rgba(255,210,160,0.010) 66px,rgba(60,25,5,0.018) 66px,rgba(60,25,5,0.018) 68px,rgba(60,25,5,0.004) 68px,rgba(60,25,5,0.004) 70px,rgba(60,25,5,0.018) 70px,rgba(60,25,5,0.018) 71px,rgba(255,210,160,0.003) 71px,rgba(255,210,160,0.003) 72px,rgba(255,210,160,0.004) 72px,rgba(255,210,160,0.004) 75px,rgba(60,25,5,0.013) 75px,rgba(60,25,5,0.013) 77px,rgba(60,25,5,0.002) 77px,rgba(60,25,5,0.002) 78px,rgba(255,210,160,0.005) 78px,rgba(255,210,160,0.005) 80px,rgba(255,210,160,0.009) 80px,rgba(255,210,160,0.009) 82px,rgba(60,25,5,0.006) 82px,rgba(60,25,5,0.006) 84px,rgba(60,25,5,0.003) 84px,rgba(60,25,5,0.003) 85px,rgba(60,25,5,0.014) 85px,rgba(60,25,5,0.014) 88px,rgba(60,25,5,0.016) 88px,rgba(60,25,5,0.016) 89px,rgba(60,25,5,0.010) 89px,rgba(60,25,5,0.010) 91px,rgba(60,25,5,0.006) 91px,rgba(60,25,5,0.006) 92px,rgba(60,25,5,0.002) 92px,rgba(60,25,5,0.002) 93px,rgba(255,210,160,0.022) 93px,rgba(255,210,160,0.022) 95px,rgba(60,25,5,0.013) 95px,rgba(60,25,5,0.013) 98px,rgba(60,25,5,0.020) 98px,rgba(60,25,5,0.020) 99px,rgba(255,210,160,0.015) 99px,rgba(255,210,160,0.015) 101px,rgba(60,25,5,0.013) 101px,rgba(60,25,5,0.013) 102px,rgba(60,25,5,0.016) 102px,rgba(60,25,5,0.016) 103px,rgba(60,25,5,0.002) 103px,rgba(60,25,5,0.002) 104px,rgba(255,210,160,0.020) 104px,rgba(255,210,160,0.020) 105px,rgba(255,210,160,0.017) 105px,rgba(255,210,160,0.017) 106px,rgba(60,25,5,0.002) 106px,rgba(60,25,5,0.002) 108px,rgba(60,25,5,0.019) 108px,rgba(60,25,5,0.019) 109px,rgba(255,210,160,0.019) 109px,rgba(255,210,160,0.019) 110px,rgba(60,25,5,0.015) 110px,rgba(60,25,5,0.015) 113px,rgba(60,25,5,0.013) 113px,rgba(60,25,5,0.013) 114px,rgba(255,210,160,0.022) 114px,rgba(255,210,160,0.022) 115px,rgba(255,210,160,0.009) 115px,rgba(255,210,160,0.009) 117px,rgba(60,25,5,0.010) 117px,rgba(60,25,5,0.010) 120px,rgba(255,210,160,0.002) 120px,rgba(255,210,160,0.002) 123px,rgba(60,25,5,0.007) 123px,rgba(60,25,5,0.007) 124px,rgba(255,210,160,0.005) 124px,rgba(255,210,160,0.005) 125px,rgba(255,210,160,0.017) 125px,rgba(255,210,160,0.017) 127px,rgba(60,25,5,0.006) 127px,rgba(60,25,5,0.006) 129px,rgba(255,210,160,0.003) 129px,rgba(255,210,160,0.003) 131px,rgba(255,210,160,0.004) 131px,rgba(255,210,160,0.004) 134px,rgba(60,25,5,0.011) 134px,rgba(60,25,5,0.011) 136px,rgba(60,25,5,0.015) 136px,rgba(60,25,5,0.015) 138px,rgba(255,210,160,0.018) 138px,rgba(255,210,160,0.018) 140px,rgba(60,25,5,0.019) 140px,rgba(60,25,5,0.019) 141px,rgba(60,25,5,0.020) 141px,rgba(60,25,5,0.020) 144px,rgba(255,210,160,0.011) 144px,rgba(255,210,160,0.011) 145px,rgba(255,210,160,0.016) 145px,rgba(255,210,160,0.016) 146px,rgba(60,25,5,0.018) 146px,rgba(60,25,5,0.018) 148px,rgba(60,25,5,0.006) 148px,rgba(60,25,5,0.006) 150px,rgba(60,25,5,0.008) 150px,rgba(60,25,5,0.008) 152px,rgba(255,210,160,0.016) 152px,rgba(255,210,160,0.016) 154px,rgba(60,25,5,0.010) 154px,rgba(60,25,5,0.010) 157px,rgba(255,210,160,0.006) 157px,rgba(255,210,160,0.006) 158px,rgba(60,25,5,0.013) 158px,rgba(60,25,5,0.013) 160px,rgba(60,25,5,0.000) 160px,rgba(60,25,5,0.000) 163px,rgba(255,210,160,0.004) 163px,rgba(255,210,160,0.004) 165px,rgba(60,25,5,0.005) 165px,rgba(60,25,5,0.005) 167px,rgba(60,25,5,0.022) 167px,rgba(60,25,5,0.022) 168px,rgba(255,210,160,0.014) 168px,rgba(255,210,160,0.014) 169px,rgba(255,210,160,0.021) 169px,rgba(255,210,160,0.021) 171px,rgba(60,25,5,0.018) 171px,rgba(60,25,5,0.018) 172px,rgba(60,25,5,0.017) 172px,rgba(60,25,5,0.017) 173px,rgba(60,25,5,0.004) 173px,rgba(60,25,5,0.004) 174px,rgba(255,210,160,0.012) 174px,rgba(255,210,160,0.012) 176px,rgba(255,210,160,0.014) 176px,rgba(255,210,160,0.014) 179px,rgba(255,210,160,0.019) 179px,rgba(255,210,160,0.019) 181px,rgba(255,210,160,0.002) 181px,rgba(255,210,160,0.002) 182px,rgba(60,25,5,0.003) 182px,rgba(60,25,5,0.003) 184px,rgba(255,210,160,0.008) 184px,rgba(255,210,160,0.008) 185px,rgba(255,210,160,0.018) 185px,rgba(255,210,160,0.018) 188px,rgba(255,210,160,0.007) 188px,rgba(255,210,160,0.007) 190px,rgba(255,210,160,0.016) 190px,rgba(255,210,160,0.016) 191px,rgba(255,210,160,0.005) 191px,rgba(255,210,160,0.005) 192px,rgba(60,25,5,0.022) 192px,rgba(60,25,5,0.022) 193px,rgba(255,210,160,0.006) 193px,rgba(255,210,160,0.006) 195px,rgba(60,25,5,0.008) 195px,rgba(60,25,5,0.008) 196px,rgba(60,25,5,0.008) 196px,rgba(60,25,5,0.008) 198px,rgba(60,25,5,0.011) 198px,rgba(60,25,5,0.011) 200px,rgba(60,25,5,0.009) 200px,rgba(60,25,5,0.009) 201px,rgba(255,210,160,0.007) 201px,rgba(255,210,160,0.007) 204px,rgba(255,210,160,0.010) 204px,rgba(255,210,160,0.010) 205px,rgba(255,210,160,0.018) 205px,rgba(255,210,160,0.018) 208px,rgba(255,210,160,0.013) 208px,rgba(255,210,160,0.013) 210px,rgba(255,210,160,0.010) 210px,rgba(255,210,160,0.010) 211px,rgba(60,25,5,0.014) 211px,rgba(60,25,5,0.014) 214px,rgba(255,210,160,0.006) 214px,rgba(255,210,160,0.006) 217px,rgba(255,210,160,0.005) 217px,rgba(255,210,160,0.005) 220px,rgba(255,210,160,0.012) 220px,rgba(255,210,160,0.012) 223px,rgba(60,25,5,0.009) 223px,rgba(60,25,5,0.009) 224px,rgba(60,25,5,0.013) 224px,rgba(60,25,5,0.013) 225px,rgba(60,25,5,0.011) 225px,rgba(60,25,5,0.011) 226px,rgba(60,25,5,0.003) 226px,rgba(60,25,5,0.003) 229px,rgba(60,25,5,0.001) 229px,rgba(60,25,5,0.001) 230px,rgba(255,210,160,0.020) 230px,rgba(255,210,160,0.020) 232px,rgba(60,25,5,0.006) 232px,rgba(60,25,5,0.006) 234px,rgba(255,210,160,0.007) 234px,rgba(255,210,160,0.007) 235px,rgba(60,25,5,0.012) 235px,rgba(60,25,5,0.012) 237px,rgba(255,210,160,0.014) 237px,rgba(255,210,160,0.014) 239px,rgba(255,210,160,0.015) 239px,rgba(255,210,160,0.015) 240px,rgba(60,25,5,0.004) 240px,rgba(60,25,5,0.004) 241px,rgba(60,25,5,0.007) 241px,rgba(60,25,5,0.007) 243px,rgba(60,25,5,0.011) 243px,rgba(60,25,5,0.011) 246px,rgba(60,25,5,0.003) 246px,rgba(60,25,5,0.003) 249px,rgba(255,210,160,0.016) 249px,rgba(255,210,160,0.016) 251px,rgba(255,210,160,0.001) 251px,rgba(255,210,160,0.001) 253px,rgba(60,25,5,0.014) 253px,rgba(60,25,5,0.014) 256px,rgba(60,25,5,0.014) 256px,rgba(60,25,5,0.014) 259px,rgba(255,210,160,0.013) 259px,rgba(255,210,160,0.013) 262px,rgba(255,210,160,0.020) 262px,rgba(255,210,160,0.020) 263px,rgba(60,25,5,0.020) 263px,rgba(60,25,5,0.020) 265px,rgba(60,25,5,0.020) 265px,rgba(60,25,5,0.020) 267px,rgba(60,25,5,0.020) 267px,rgba(60,25,5,0.020) 268px,rgba(60,25,5,0.003) 268px,rgba(60,25,5,0.003) 269px,rgba(255,210,160,0.002) 269px,rgba(255,210,160,0.002) 271px,rgba(255,210,160,0.012) 271px,rgba(255,210,160,0.012) 273px,rgba(255,210,160,0.009) 273px,rgba(255,210,160,0.009) 274px,rgba(255,210,160,0.002) 274px,rgba(255,210,160,0.002) 275px,rgba(255,210,160,0.020) 275px,rgba(255,210,160,0.020) 277px,rgba(255,210,160,0.016) 277px,rgba(255,210,160,0.016) 278px,rgba(255,210,160,0.011) 278px,rgba(255,210,160,0.011) 280px,rgba(60,25,5,0.018) 280px,rgba(60,25,5,0.018) 281px,rgba(255,210,160,0.001) 281px,rgba(255,210,160,0.001) 282px,rgba(60,25,5,0.020) 282px,rgba(60,25,5,0.020) 285px,rgba(60,25,5,0.004) 285px,rgba(60,25,5,0.004) 286px,rgba(255,210,160,0.022) 286px,rgba(255,210,160,0.022) 287px,rgba(60,25,5,0.013) 287px,rgba(60,25,5,0.013) 288px,rgba(60,25,5,0.002) 288px,rgba(60,25,5,0.002) 290px,rgba(60,25,5,0.010) 290px,rgba(60,25,5,0.010) 292px,rgba(60,25,5,0.005) 292px,rgba(60,25,5,0.005) 294px,rgba(60,25,5,0.019) 294px,rgba(60,25,5,0.019) 295px,rgba(60,25,5,0.008) 295px,rgba(60,25,5,0.008) 297px,rgba(60,25,5,0.013) 297px,rgba(60,25,5,0.013) 298px,rgba(60,25,5,0.007) 298px,rgba(60,25,5,0.007) 299px,rgba(60,25,5,0.013) 299px,rgba(60,25,5,0.013) 301px,rgba(255,210,160,0.022) 301px,rgba(255,210,160,0.022) 304px,rgba(60,25,5,0.006) 304px,rgba(60,25,5,0.006) 306px,rgba(60,25,5,0.018) 306px,rgba(60,25,5,0.018) 307px,rgba(255,210,160,0.019) 307px,rgba(255,210,160,0.019) 309px,rgba(60,25,5,0.017) 309px,rgba(60,25,5,0.017) 311px,rgba(60,25,5,0.002) 311px,rgba(60,25,5,0.002) 312px,rgba(255,210,160,0.002) 312px,rgba(255,210,160,0.002) 314px,rgba(60,25,5,0.001) 314px,rgba(60,25,5,0.001) 317px,rgba(255,210,160,0.007) 317px,rgba(255,210,160,0.007) 319px,rgba(60,25,5,0.004) 319px,rgba(60,25,5,0.004) 322px,rgba(255,210,160,0.022) 322px,rgba(255,210,160,0.022) 325px,rgba(255,210,160,0.017) 325px,rgba(255,210,160,0.017) 326px,rgba(60,25,5,0.003) 326px,rgba(60,25,5,0.003) 327px,rgba(60,25,5,0.006) 327px,rgba(60,25,5,0.006) 328px,rgba(255,210,160,0.017) 328px,rgba(255,210,160,0.017) 329px,rgba(60,25,5,0.002) 329px,rgba(60,25,5,0.002) 330px,rgba(60,25,5,0.012) 330px,rgba(60,25,5,0.012) 332px,rgba(255,210,160,0.012) 332px,rgba(255,210,160,0.012) 335px,rgba(60,25,5,0.018) 335px,rgba(60,25,5,0.018) 337px,rgba(255,210,160,0.015) 337px,rgba(255,210,160,0.015) 340px,rgba(60,25,5,0.020) 340px,rgba(60,25,5,0.020) 342px,rgba(255,210,160,0.021) 342px,rgba(255,210,160,0.021) 344px,rgba(60,25,5,0.013) 344px,rgba(60,25,5,0.013) 347px,rgba(60,25,5,0.009) 347px,rgba(60,25,5,0.009) 349px,rgba(60,25,5,0.007) 349px,rgba(60,25,5,0.007) 352px,rgba(255,210,160,0.014) 352px,rgba(255,210,160,0.014) 354px,rgba(255,210,160,0.015) 354px,rgba(255,210,160,0.015) 356px,rgba(60,25,5,0.000) 356px,rgba(60,25,5,0.000) 357px,rgba(60,25,5,0.014) 357px,rgba(60,25,5,0.014) 358px,rgba(60,25,5,0.001) 358px,rgba(60,25,5,0.001) 360px,rgba(255,210,160,0.001) 360px,rgba(255,210,160,0.001) 362px,rgba(255,210,160,0.002) 362px,rgba(255,210,160,0.002) 364px,rgba(60,25,5,0.016) 364px,rgba(60,25,5,0.016) 366px,rgba(60,25,5,0.001) 366px,rgba(60,25,5,0.001) 367px,rgba(255,210,160,0.003) 367px,rgba(255,210,160,0.003) 369px,rgba(60,25,5,0.013) 369px,rgba(60,25,5,0.013) 370px,rgba(60,25,5,0.009) 370px,rgba(60,25,5,0.009) 373px,rgba(60,25,5,0.008) 373px,rgba(60,25,5,0.008) 374px,rgba(255,210,160,0.010) 374px,rgba(255,210,160,0.010) 376px,rgba(255,210,160,0.013) 376px,rgba(255,210,160,0.013) 378px,rgba(255,210,160,0.008) 378px,rgba(255,210,160,0.008) 380px,rgba(255,210,160,0.021) 380px,rgba(255,210,160,0.021) 381px,rgba(60,25,5,0.011) 381px,rgba(60,25,5,0.011) 382px,rgba(255,210,160,0.017) 382px,rgba(255,210,160,0.017) 384px,rgba(255,210,160,0.006) 384px,rgba(255,210,160,0.006) 386px,rgba(60,25,5,0.015) 386px,rgba(60,25,5,0.015) 389px,rgba(60,25,5,0.017) 389px,rgba(60,25,5,0.017) 391px,rgba(255,210,160,0.011) 391px,rgba(255,210,160,0.011) 392px,rgba(60,25,5,0.019) 392px,rgba(60,25,5,0.019) 393px,rgba(60,25,5,0.000) 393px,rgba(60,25,5,0.000) 394px,rgba(60,25,5,0.014) 394px,rgba(60,25,5,0.014) 395px,rgba(255,210,160,0.006) 395px,rgba(255,210,160,0.006) 398px,rgba(255,210,160,0.012) 398px,rgba(255,210,160,0.012) 399px,rgba(60,25,5,0.011) 399px,rgba(60,25,5,0.011) 401px,rgba(255,210,160,0.008) 401px,rgba(255,210,160,0.008) 403px,rgba(60,25,5,0.018) 403px,rgba(60,25,5,0.018) 404px,rgba(255,210,160,0.018) 404px,rgba(255,210,160,0.018) 407px,rgba(60,25,5,0.009) 407px,rgba(60,25,5,0.009) 409px,rgba(255,210,160,0.008) 409px,rgba(255,210,160,0.008) 410px,rgba(60,25,5,0.007) 410px,rgba(60,25,5,0.007) 413px,rgba(60,25,5,0.009) 413px,rgba(60,25,5,0.009) 414px,rgba(60,25,5,0.010) 414px,rgba(60,25,5,0.010) 415px,rgba(255,210,160,0.002) 415px,rgba(255,210,160,0.002) 418px,rgba(60,25,5,0.018) 418px,rgba(60,25,5,0.018) 420px,rgba(60,25,5,0.002) 420px,rgba(60,25,5,0.002) 421px,rgba(60,25,5,0.002) 421px,rgba(60,25,5,0.002) 424px,rgba(60,25,5,0.006) 424px,rgba(60,25,5,0.006) 426px),linear-gradient(#432713 0%,#4c2c14 3%,#5e3415 6%,#85481b 9%,#a05a22 12%,#b4642a 15%,#bb6a2c 19%,#be6d2e 35%,#bd6c2d 55%,#bd6d2e 80%,#b4612a 90%,#ad5a22 100%);box-shadow:inset 2px 0 2px -1px rgba(40,15,0,.35),inset -2px 0 2px -1px rgba(40,15,0,.3)"></div>
<div class="a" style="left:568px;top:315px;width:56px;height:60px;background:radial-gradient(ellipse 22px 14px at 46px 32px,rgba(75,40,12,.6),rgba(90,48,15,.3) 60%,rgba(120,60,20,0) 100%),radial-gradient(ellipse 46px 22px at 44px 32px,rgba(110,58,20,.35),rgba(120,60,20,0) 100%)"></div>
<div class="a" style="left:162px;top:77px;width:406px;height:425px;background:#fff"></div>

<div class="a" style="left:220px;top:90px;width:290px;height:1px;background:#dcdfe5"></div>
<div class="a" style="left:220px;top:102px;width:290px;height:1px;background:#f3f3f5"></div>
<div class="a" style="left:220px;top:113px;width:290px;height:1px;background:#dcdfe5"></div>
<div class="a" style="left:220px;top:125px;width:290px;height:1px;background:#f3f3f5"></div>
<div class="a" style="left:220px;top:136px;width:290px;height:1px;background:#dcdfe5"></div>
<div class="a" style="left:220px;top:148px;width:290px;height:1px;background:#e8e8ea"></div>
<div class="a" style="left:220px;top:159px;width:290px;height:1px;background:#e8e8ea"></div>
<div class="a" style="left:220px;top:170px;width:290px;height:1px;background:#dcdfe5"></div>
<div class="a" style="left:220px;top:182px;width:290px;height:1px;background:#f3f3f5"></div>
<div class="a" style="left:220px;top:193px;width:290px;height:1px;background:#dcdfe5"></div>
<div class="a" style="left:220px;top:205px;width:290px;height:1px;background:#f3f3f5"></div>
<div class="a" style="left:220px;top:216px;width:290px;height:1px;background:#dcdfe5"></div>
<div class="a" style="left:220px;top:228px;width:290px;height:1px;background:#f3f3f5"></div>
<div class="a" style="left:220px;top:239px;width:290px;height:1px;background:#dcdfe5"></div>
<div class="a" style="left:220px;top:251px;width:290px;height:1px;background:#e8e8ea"></div>
<div class="a" style="left:220px;top:262px;width:290px;height:1px;background:#e8e8ea"></div>
<div class="a" style="left:220px;top:273px;width:290px;height:1px;background:#e8e8ea"></div>
<div class="a" style="left:220px;top:285px;width:290px;height:1px;background:#e8e8ea"></div>
<div class="a" style="left:220px;top:296px;width:290px;height:1px;background:#dcdfe5"></div>
<div class="a" style="left:220px;top:308px;width:290px;height:1px;background:#f3f3f5"></div>
<div class="a" style="left:220px;top:319px;width:290px;height:1px;background:#dcdfe5"></div>
<div class="a" style="left:220px;top:331px;width:290px;height:1px;background:#f3f3f5"></div>
<div class="a" style="left:220px;top:342px;width:290px;height:1px;background:#dcdfe5"></div>
<div class="a" style="left:220px;top:354px;width:290px;height:1px;background:#e8e8ea"></div>
<div class="a" style="left:220px;top:365px;width:290px;height:1px;background:#dcdfe5"></div>
<div class="a" style="left:220px;top:376px;width:290px;height:1px;background:#e8e8ea"></div>
<div class="a" style="left:220px;top:388px;width:290px;height:1px;background:#e8e8ea"></div>
<div class="a" style="left:220px;top:399px;width:290px;height:1px;background:#dcdfe5"></div>
<div class="a" style="left:220px;top:411px;width:290px;height:1px;background:#f3f3f5"></div>
<div class="a" style="left:220px;top:422px;width:290px;height:1px;background:#dcdfe5"></div>
<div class="a" style="left:220px;top:434px;width:290px;height:1px;background:#f3f3f5"></div>
<div class="a" style="left:220px;top:445px;width:290px;height:1px;background:#dcdfe5"></div>
<div class="a" style="left:220px;top:457px;width:290px;height:1px;background:#e8e8ea"></div>
<div class="a" style="left:220px;top:468px;width:290px;height:1px;background:#dcdfe5"></div>
<div class="a" style="left:220px;top:479px;width:290px;height:1px;background:#e8e8ea"></div>
<div class="a" style="left:220px;top:491px;width:290px;height:1px;background:#e8e8ea"></div>
<!-- indent markers -->
<svg style="left:216px;top:63px" width="9" height="14"><path d="M4.5 0V5" stroke="#555" stroke-width="1"/><circle cx="4.5" cy="6.5" r="1.8" fill="#fff" stroke="#777" stroke-width=".8"/><path d="M2.5 11H6.5L4.5 8.5Z" fill="#fff" stroke="#777" stroke-width=".8"/><rect x="2" y="11.5" width="5" height="1.5" fill="#3a7ad8"/></svg>
<svg style="left:506px;top:63px" width="9" height="14"><circle cx="4.5" cy="6.5" r="1.8" fill="#fff" stroke="#777" stroke-width=".8"/><path d="M2.5 11H6.5L4.5 8.5Z" fill="#fff" stroke="#777" stroke-width=".8"/><rect x="2" y="11.5" width="5" height="1.5" fill="#3a7ad8"/></svg>
<!-- vscroll -->
<div class="a" style="left:624px;top:62px;width:9px;height:449px;background:#f3f3f3;border-right:1px solid #d2d2d2"></div>
<div class="a" style="left:628px;top:72px;width:1px;height:362px;background:#444"></div><div class="a" style="left:629px;top:72px;width:1px;height:362px;background:#aaa"></div>
<div class="a" style="left:624px;top:484px;width:9px;height:8px;background:#fafafa;border:1px solid #d8d8d8"></div>
<div class="a" style="left:624px;top:492px;width:9px;height:8px;background:#fafafa;border:1px solid #d8d8d8"></div>
<svg style="left:626px;top:485px" width="5" height="14"><path d="M.5 3L2.5 1L4.5 3M.5 5.5L2.5 3.5L4.5 5.5M.5 9L2.5 11L4.5 9M.5 11.5L2.5 13.5L4.5 11.5" fill="none" stroke="#333" stroke-width=".8"/></svg>
<!-- bottom bar -->
<div class="a" style="left:97px;top:502px;width:536px;height:9px;background:linear-gradient(#f4f4f4,#e9e9e9);border-top:1px solid #d6d6d6"></div>

<svg style="left:101px;top:505px" width="12" height="4"><path d="M2.5 0L.5 2L2.5 4M9.5 0L11.5 2L9.5 4" fill="none" stroke="#999" stroke-width=".8"/></svg>
<div class="a" style="left:115px;top:502px;width:33px;height:9px;background:#fff;border-right:1px solid #ccc"></div>
<div class="a" style="left:118px;top:504px;width:3px;height:4px;border:1px solid #9ab0d8;background:#eef4fc"></div>
<div class="t" style="left:123px;top:503px;font-size:7px;font-weight:bold;color:#111;letter-spacing:-.3px">Sheet1</div>
<div class="a" style="left:148px;top:502px;width:12px;height:9px;background:#f6f6f6;border-right:1px solid #ccc"></div>
<div class="t" style="left:151px;top:503px;font-size:8px;font-weight:bold;color:#111">+</div>
<div class="a" style="left:232px;top:502px;width:200px;height:9px;background:linear-gradient(#fafafa,#f0f0f0);border-left:1px solid #c8c8c8"></div>
<svg style="left:236px;top:503px" width="8" height="7"><rect x=".5" y=".5" width="7" height="6" fill="#fff" stroke="#778"/><rect x=".5" y=".5" width="7" height="1.5" fill="#d44"/><rect x="4" y="3" width="3" height="3" fill="#48c"/></svg>
<div class="t" style="left:258px;top:503px;font-size:6px;color:#333">頁</div>
<div class="t" style="left:279px;top:503px;font-size:6px;color:#333">行</div>
<div class="t" style="left:298px;top:503px;font-size:6px;color:#333">字</div>
<div class="t" style="left:325px;top:504px;font-size:5.5px;color:#333">100%</div>
<div class="dd" style="left:339px;top:506px;border-top-color:#666"></div>
<div class="a" style="left:350px;top:503px;width:6px;height:6px;background:#333;border-radius:1px"></div>
<div class="a" style="left:360px;top:506px;width:53px;height:1px;background:#bbb"></div>
<div class="a" style="left:385px;top:503px;width:5px;height:7px;background:#fff;border:1px solid #666;border-radius:1px 1px 2px 2px"></div>
<div class="a" style="left:420px;top:503px;width:6px;height:6px;background:#333;border-radius:1px"></div>
<svg style="left:432px;top:504px" width="4" height="5"><path d="M3.5 0V5L0 2.5Z" fill="#aaa"/></svg>
<svg style="left:617px;top:504px" width="4" height="5"><path d="M0 0V5L3.5 2.5Z" fill="#aaa"/></svg>
<div class="a" style="left:622px;top:502px;width:1px;height:9px;background:#ccc"></div>
<!-- status bar -->
<div class="a" style="left:0;top:511px;width:800px;height:13px;background:linear-gradient(#eeeeee,#e2e2e2);border-top:1px solid #cdcdcd;border-bottom:2px solid #a2a2a2;border-left:1px solid #9a9a9a;border-right:1px solid #9a9a9a"></div>
<div class="a" style="left:29px;top:513px;width:8px;height:9px;background:#f4f4f4;border:1px solid #999"></div>
<div class="t" style="left:31px;top:514px;font-size:6px;color:#222">F</div>
<div class="a" style="left:37px;top:513px;width:15px;height:9px;background:#eaeaea;border:1px solid #bbb"></div>
<div class="t" style="left:38px;top:514px;font-size:6px;color:#222">挿入</div>
<div class="t" style="left:76px;top:514px;font-size:6px;color:#2a5ad8">0 文字</div>
<div class="a" style="left:103px;top:513px;width:1px;height:8px;background:#333"></div>

<!-- ============ right panel ============ -->
<div class="a" style="left:633px;top:49px;width:167px;height:462px;background:#f0f0f0;border-left:1px solid #c6c6c6;border-right:1px solid #9a9a9a"></div>
<div class="a" style="left:634px;top:49px;width:165px;height:15px;background:linear-gradient(#f6f6f6,#ececec)"></div>
<svg style="left:636px;top:55px" width="4" height="5"><path d="M0 0V5L3.5 2.5Z" fill="#555"/></svg>
<svg style="left:646px;top:53px" width="9" height="9"><rect x="2.5" y=".5" width="6" height="8" fill="#333"/><rect x="4" y="2.5" width="3" height="1" fill="#ddd"/><rect x="4" y="4.5" width="3" height="1" fill="#ddd"/><path d="M0 6H4M1.5 4.5L0 6L1.5 7.5" fill="none" stroke="#111" stroke-width="1"/></svg>
<div class="t" style="left:693px;top:53px;font-size:6px;color:#333;letter-spacing:-.5px">基本編集ツールパレット</div>
<svg style="left:787px;top:52px" width="9" height="10"><rect x="1.5" y="1.5" width="6" height="7" fill="#e8e8e8" stroke="#777"/><rect x="0" y="0" width="9" height="1" fill="#444"/><rect x="0" y="9" width="9" height="1" fill="#444"/><rect x="3" y="3" width="3" height="4" fill="#aaa"/></svg>
<!-- inner panel -->
<div class="a" style="left:636px;top:64px;width:154px;height:446px;background:#f0f0f0;border-right:1px solid #d4d4d4"></div>
<div class="a" style="left:790px;top:64px;width:9px;height:446px;background:#f0f0f0"></div>
<div class="a" style="left:795px;top:73px;width:1px;height:315px;background:#8a8a8a"></div>
<!-- ATOK header -->
<div class="a" style="left:636px;top:64px;width:154px;height:14px;background:linear-gradient(#d4e4f8,#b8d3f4);border-bottom:1px solid #6aa2e4"></div>
<svg style="left:638px;top:66px" width="10" height="10"><path d="M0 .5H4.5L5.5 4L7.5 .5H10L5 9.5Z" fill="#1a2438"/></svg>
<div class="t" style="left:651px;top:67px;font-size:7px;color:#1f3152">ATOK Passport</div>
<svg style="left:786px;top:71px" width="4" height="4"><path d="M.5 3.5L3.5 .5" fill="none" stroke="#4a6aa0" stroke-width="1"/></svg>
<!-- ATOK icons -->
<div class="a" style="left:640px;top:80px;width:20px;height:17px;background:#d6e6f8;border:1px solid #b4cff0"></div>
<svg style="left:644px;top:82px" width="12" height="12"><circle cx="5.5" cy="6" r="4.5" fill="none" stroke="#333" stroke-width="1.1"/><path d="M5.5 3V6L7.5 7" fill="none" stroke="#333" stroke-width="1"/><circle cx="9" cy="9" r="2.6" fill="#e02020"/></svg>
<svg style="left:664px;top:84px" width="13" height="9"><path d="M2 .5H12V5L8 8.5L4 5H2Z" fill="#333"/><path d="M0 2.5H5" stroke="#333" stroke-width="1"/><rect x="4" y="2" width="6" height="1.5" fill="#eee"/></svg>
<svg style="left:685px;top:82px" width="8" height="12"><circle cx="4" cy="4" r="3.2" fill="#fff" stroke="#333" stroke-width="1"/><path d="M2.5 7.5H5.5V9.5H2.5ZM3 10.5H5" fill="none" stroke="#333" stroke-width="1"/></svg>
<svg style="left:742px;top:84px" width="9" height="9"><rect x=".5" y=".5" width="8" height="8" fill="#fff" stroke="#333"/><path d="M1 8L8 1M5 8.5H8.5V5" stroke="#333" stroke-width="1.5" fill="none"/><rect x="1" y="1" width="3" height="3" fill="#555"/></svg>
<svg style="left:759px;top:84px" width="9" height="9"><rect x=".5" y="2.5" width="7" height="6" fill="#333"/><path d="M3 5L8 .5M6 .5H8.5V3" stroke="#333" stroke-width="1.3" fill="none"/></svg>
<div class="sep" style="left:772px;top:82px;height:14px;background:#c8c8c8"></div>
<svg style="left:779px;top:84px" width="8" height="10"><rect x=".5" y=".5" width="7" height="9" fill="#fafafa" stroke="#777"/><path d="M2 4.5H6" stroke="#555"/></svg>
<div class="a" style="left:636px;top:100px;width:154px;height:1px;background:#dcdcdc"></div>
<!-- chat -->
<div class="a" style="left:636px;top:101px;width:154px;height:121px;background:#ececec"></div>
<div class="a" style="left:641px;top:108px;width:17px;height:17px;border-radius:50%;background:#e22a2a"></div>
<div class="a" style="left:645px;top:113px;width:9px;height:8px;background:#fff"></div>
<div class="a" style="left:645px;top:116px;width:6px;height:2px;background:#e22a2a"></div>
<div class="t" style="left:642px;top:128px;font-size:5.8px;color:#777">21:33</div>
<div class="a" style="left:662px;top:108px;width:117px;height:59px;border-radius:6px;background:#fff"></div>
<svg style="left:737px;top:124px" width="37" height="42"><path d="M0 0H26L37 11V42H0Z" fill="#fcf1f1"/><path d="M26 0V11H37" fill="#f6e0e0"/><path d="M4 16H33M4 19H33M4 22H33M4 25H33M4 28H33M4 31H33M4 34H33M4 37H33" stroke="#f4dada" stroke-width="1"/></svg>
<div class="t" style="left:668px;top:114px;font-size:7.2px;color:#111;line-height:8.4px">【辞書引き】を試してみません<br>か。</div>
<div class="t" style="left:668px;top:133px;font-size:7.2px;color:#111;line-height:8.4px">1. 調べたい単語にカーソルを合わ<br>せる<br>2. Ctrlキーを押す</div>
<div class="a" style="left:641px;top:170px;width:17px;height:17px;border-radius:50%;background:#fff"></div>
<svg style="left:644px;top:173px" width="11" height="11"><path d="M1.5 10.5L6 1L9.5 10.5" fill="none" stroke="#e02020" stroke-width="1.6"/><path d="M3.5 7H8" stroke="#e02020" stroke-width="1"/></svg>
<div class="t" style="left:642px;top:189px;font-size:5.8px;color:#777">21:33</div>
<div class="a" style="left:662px;top:171px;width:117px;height:44px;border-radius:6px;background:#fff"></div>
<div class="t" style="left:668px;top:176px;font-size:7.2px;color:#111;line-height:10px">こんばんは。<br>新しいアップデートがあります。</div>
<div class="a" style="left:729px;top:201px;width:43px;height:11px;background:#dd2a2a;border-radius:1px"></div>
<div class="t" style="left:737px;top:203px;font-size:6.5px;font-weight:bold;color:#fff">確認する</div>
<div class="a" style="left:702px;top:217px;width:28px;height:5px;background:#f2f2f2;border:1px solid #d0d0d0;border-bottom:none;border-radius:2px 2px 0 0"></div>
<div class="a" style="left:713px;top:219px;width:6px;height:1px;background:#aaa"></div>
<div class="a" style="left:786px;top:108px;width:2px;height:10px;background:#777"></div>
<!-- 文字数 header -->
<div class="a" style="left:636px;top:222px;width:154px;height:14px;background:linear-gradient(#eaf3fd,#e4eefa);border-top:1px solid #a8c8f0;border-bottom:1px solid #f4f8fd"></div>
<svg style="left:638px;top:225px" width="9" height="8"><rect x=".5" y="2.5" width="8" height="5" fill="#fff" stroke="#333"/><path d="M2 1H7" stroke="#333"/><rect x="2" y="4" width="5" height="2" fill="#666"/></svg>
<div class="t" style="left:651px;top:226px;font-size:6px;color:#2a4a80">文字数</div>
<svg style="left:786px;top:227px" width="4" height="4"><path d="M.5 .5L3.5 3.5" fill="none" stroke="#2a4a80" stroke-width="1.1"/></svg>
<!-- 文字 header -->
<div class="a" style="left:636px;top:236px;width:154px;height:14px;background:linear-gradient(#cadff8,#9fc5f4);border-top:1px solid #5f9de2;border-bottom:1px solid #5f9de2"></div>
<div class="t" style="left:639px;top:239px;font-size:7px;color:#333">あ</div>
<div class="t" style="left:651px;top:240px;font-size:6px;color:#1f3152">文字</div>
<svg style="left:786px;top:241px" width="4" height="4"><path d="M.5 3.5L3.5 .5" fill="none" stroke="#4a6aa0" stroke-width="1"/></svg>
<!-- 文字 content -->
<div class="a" style="left:663px;top:255px;width:22px;height:24px;background:#d9e8f9;border:1px solid #bcd4f2"></div>
<div class="t" style="left:647px;top:258px;font-size:10px;color:#111">葛</div>
<svg style="left:667px;top:257px" width="13" height="13"><rect x="0" y="0" width="7" height="7" fill="#e03030"/><rect x="4" y="4" width="9" height="9" rx="1" fill="#2a5ad0"/><rect x="6" y="6" width="5" height="5" fill="#fff" opacity=".7"/></svg>
<svg style="left:690px;top:258px" width="13" height="12"><rect x="0" y="0" width="3" height="3" fill="#b060b0"/><rect x="4" y="0" width="3" height="3" fill="#b060b0"/><rect x="0" y="4" width="3" height="3" fill="#b060b0"/><circle cx="8.5" cy="7.5" r="4.5" fill="#2a5ad0"/><circle cx="8.5" cy="7.5" r="2" fill="#fff" opacity=".7"/></svg>
<svg style="left:713px;top:258px" width="12" height="12"><path d="M1 1L8 9" stroke="#333" stroke-width="1.3"/><path d="M6 3L11 11M11 6L7 11" stroke="#2a9a2a" stroke-width="1.2"/><path d="M3 0L5 3" stroke="#d08020" stroke-width="1.2"/></svg>
<div class="t" style="left:737px;top:257px;font-size:10px;color:#111">漢</div>
<svg style="left:736px;top:266px" width="5" height="5"><path d="M.5 1L2 4L4.5 0" fill="none" stroke="#e02020" stroke-width="1"/></svg>
<div class="t" style="left:642px;top:271px;font-size:6px;color:#111">異体字</div>
<div class="t" style="left:667px;top:271px;font-size:6px;color:#111">表現</div>
<div class="t" style="left:690px;top:271px;font-size:6px;color:#111">文字</div>
<div class="t" style="left:709px;top:271px;font-size:6px;color:#111">準仮名</div>
<div class="t" style="left:735px;top:271px;font-size:6px;color:#111">漢文</div>
<div class="a" style="left:636px;top:281px;width:154px;height:1px;background:#d4d4d4"></div>
<div class="t" style="left:640px;top:288px;font-size:6px;color:#111">表現モード</div>
<div class="a" style="left:673px;top:285px;width:77px;height:12px;background:#fff;border:1px solid #c8c8c8"></div>
<div class="t" style="left:676px;top:288px;font-size:6px;color:#111">一般</div>
<svg style="left:742px;top:290px" width="5" height="3"><path d="M0 0L2.5 2.5L5 0" fill="none" stroke="#666" stroke-width=".8"/></svg>
<div class="a" style="left:643px;top:303px;width:5px;height:5px;border-radius:50%;background:#7a7a7a"></div>
<div class="t" style="left:655px;top:302px;font-size:6px;color:#111">[読み言葉]モード</div>
<div class="t" style="left:652px;top:312px;font-size:5.6px;color:#111">各地の独特の読み言葉の変換ができます。</div>
<div class="a" style="left:643px;top:325px;width:5px;height:5px;border-radius:50%;background:#7a7a7a"></div>
<div class="t" style="left:655px;top:324px;font-size:6px;color:#111">[文語]モード</div>
<div class="t" style="left:652px;top:335px;font-size:5.6px;color:#111;line-height:9px">文語特有の言葉や<br>「文學」など旧字体の変換ができます。</div>
<div class="a" style="left:640px;top:357px;width:138px;height:1px;background:#d0d0d0"></div>
<div class="a" style="left:641px;top:364px;width:38px;height:11px;background:#fdfdfd;border:1px solid #cfcfcf;border-radius:1px"></div>
<div class="t" style="left:647px;top:366px;font-size:6px;color:#111">逆変換</div>
<div class="a" style="left:685px;top:364px;width:27px;height:11px;background:#fdfdfd;border:1px solid #cfcfcf;border-radius:1px"></div>
<div class="t" style="left:693px;top:366px;font-size:6px;color:#111">文例</div>
<div class="a" style="left:765px;top:364px;width:13px;height:11px;background:#fdfdfd;border:1px solid #cfcfcf"></div>
<svg style="left:768px;top:366px" width="7" height="7"><rect x=".5" y=".5" width="6" height="6" fill="#fff" stroke="#444"/><path d="M2 5L5 2" stroke="#c03030" stroke-width="1"/></svg>
<!-- font header -->
<div class="a" style="left:636px;top:384px;width:154px;height:14px;background:linear-gradient(#cadff8,#9fc5f4);border-top:1px solid #5f9de2;border-bottom:1px solid #5f9de2"></div>
<svg style="left:639px;top:387px" width="8" height="9"><path d="M2 8L6 1M4 1H7M1 8.5H7" fill="none" stroke="#222" stroke-width="1.1"/></svg>
<div class="t" style="left:651px;top:388px;font-size:6px;color:#1f3152">フォント・飾り</div>
<svg style="left:786px;top:389px" width="4" height="4"><path d="M.5 3.5L3.5 .5" fill="none" stroke="#4a6aa0" stroke-width="1"/></svg>
<!-- font left column -->
<div class="a" style="left:641px;top:409px;width:5px;height:5px;border:1px solid #888;background:#fff"></div>
<div class="t" style="left:648px;top:406px;font-size:9px;font-family:'Liberation Serif',serif;font-weight:bold;color:#111">F</div>
<div class="a" style="left:643px;top:420px;width:17px;height:1px;background:#d0d0d0"></div>
<div class="a" style="left:641px;top:427px;width:5px;height:5px;border:1px solid #888;background:#fff"></div>
<div class="t" style="left:648px;top:424px;font-size:9px;font-family:'Liberation Serif',serif;font-weight:bold;color:#111">B</div>
<div class="a" style="left:641px;top:441px;width:5px;height:5px;border:1px solid #888;background:#fff"></div>
<div class="t" style="left:648px;top:438px;font-size:9px;font-family:'Liberation Serif',serif;font-weight:bold;font-style:italic;color:#111">I</div>
<div class="a" style="left:643px;top:449px;width:17px;height:1px;background:#d0d0d0"></div>
<div class="a" style="left:641px;top:458px;width:5px;height:5px;border:1px solid #888;background:#fff"></div>
<svg style="left:646px;top:454px" width="11" height="11"><path d="M1 10L5 1.5L8 9" fill="none" stroke="#d030b0" stroke-width="1.6"/><path d="M2.5 7H7" stroke="#d030b0" stroke-width="1"/><path d="M6 2L9.5 4.5L8 6" fill="none" stroke="#555" stroke-width="1"/></svg>
<svg style="left:658px;top:458px" width="3" height="5"><path d="M.3 .3L2.5 2.5L.3 4.7" fill="none" stroke="#888" stroke-width=".9"/></svg>
<div class="a" style="left:643px;top:468px;width:17px;height:1px;background:#d0d0d0"></div>
<div class="a" style="left:641px;top:475px;width:5px;height:5px;border:1px solid #888;background:#fff"></div>
<div class="t" style="left:648px;top:472px;font-size:9px;font-family:'Liberation Serif',serif;font-weight:bold;color:#111">U</div>
<div class="a" style="left:648px;top:481px;width:8px;height:1px;background:#111"></div>
<svg style="left:658px;top:475px" width="3" height="5"><path d="M.3 .3L2.5 2.5L.3 4.7" fill="none" stroke="#888" stroke-width=".9"/></svg>
<div class="a" style="left:641px;top:489px;width:5px;height:5px;border:1px solid #888;background:#fff"></div>
<div class="t" style="left:647px;top:487px;font-size:8px;font-weight:bold;color:#111">寿</div>
<svg style="left:658px;top:489px" width="3" height="5"><path d="M.3 .3L2.5 2.5L.3 4.7" fill="none" stroke="#888" stroke-width=".9"/></svg>
<!-- font pane -->
<div class="a" style="left:663px;top:403px;width:128px;height:98px;background:#fff;border-left:1px solid #d8d8d8;border-top:1px solid #e0e0e0;border-radius:0 4px 0 0"></div>
<svg style="left:656px;top:404px" width="9" height="14"><path d="M8 0L1 7L8 14" fill="#fff" stroke="#c8c8c8" stroke-width="1"/><path d="M8.5 1V13" stroke="#fff" stroke-width="2"/></svg>
<div class="t" style="left:671px;top:410px;font-size:7.2px;color:#111">フォント</div>
<div class="a" style="left:671px;top:423px;width:114px;height:12px;background:#fff;border:1px solid #777"></div>
<div class="t" style="left:681px;top:425px;font-size:7.5px;color:#111"><i style="color:#1a3a9a;font-weight:bold">0</i> 游明朝(標準)</div>
<div class="a" style="left:671px;top:439px;width:114px;height:62px;background:#fff;border:1px solid #666;border-bottom:none"></div>
<div class="t" style="left:677px;top:441px;font-size:5.5px;color:#2a4a9a">標準</div>
<div class="a" style="left:692px;top:444px;width:88px;height:1px;background:#9ab4e0"></div>
<div class="t" style="left:682px;top:451px;font-size:9.5px;font-weight:bold;color:#111">標準</div>
<div class="t" style="left:677px;top:468px;font-size:5.8px;color:#2a4a9a">和文 - ゴシック体</div>
<div class="a" style="left:724px;top:471px;width:50px;height:1px;background:#9ab4e0"></div>
<svg style="left:776px;top:469px" width="4" height="3"><path d="M0 0L2 2.5L4 0" fill="none" stroke="#1a3a9a" stroke-width="1.1"/></svg>
<div class="t" style="left:677px;top:479px;font-size:5.8px;color:#2a4a9a">和文 - 明朝体</div>
<div class="a" style="left:716px;top:482px;width:58px;height:1px;background:#9ab4e0"></div>
<svg style="left:776px;top:480px" width="4" height="3"><path d="M0 0L2 2.5L4 0" fill="none" stroke="#1a3a9a" stroke-width="1.1"/></svg>
<div class="t" style="left:677px;top:490px;font-size:5.8px;color:#2a4a9a">和文 - 行書体</div>
<div class="a" style="left:716px;top:493px;width:58px;height:1px;background:#9ab4e0"></div>
<svg style="left:776px;top:491px" width="4" height="3"><path d="M0 0L2 2.5L4 0" fill="none" stroke="#1a3a9a" stroke-width="1.1"/></svg>
<div class="a" style="left:677px;top:499px;width:40px;height:2px;background:#b8c6e4"></div>
<div class="a" style="left:636px;top:501px;width:154px;height:10px;background:#f0f0f0"></div>
<div class="a" style="left:645px;top:507px;width:133px;height:1px;background:#444"></div>
</body></html>
